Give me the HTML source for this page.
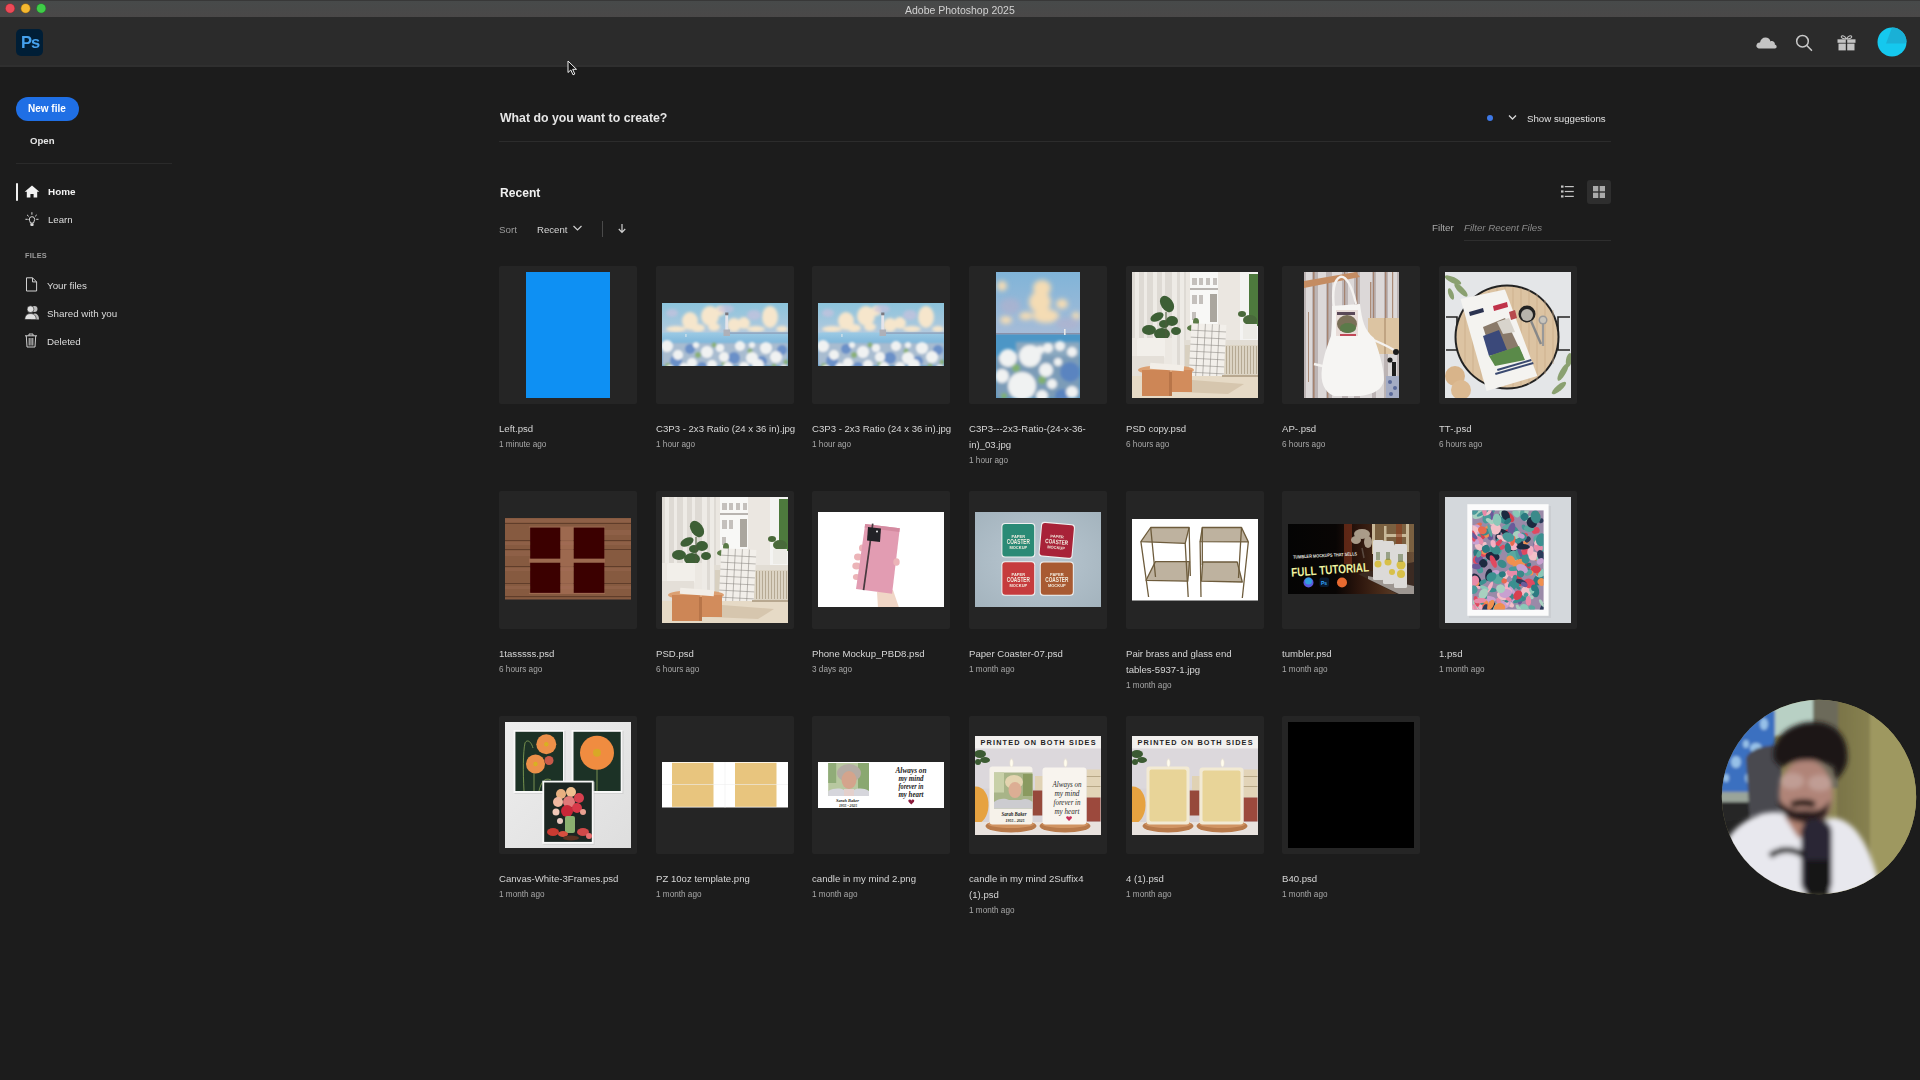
<!DOCTYPE html>
<html><head><meta charset="utf-8"><style>
*{margin:0;padding:0;box-sizing:border-box}
html,body{width:1920px;height:1080px;overflow:hidden}
body{background:#1c1c1c;position:relative;font-family:"Liberation Sans",sans-serif;color:#e8e8e8}
.a{position:absolute}
.t{position:absolute;white-space:nowrap;line-height:1;will-change:transform}
#titlebar{left:0;top:0;width:1920px;height:17px;background:linear-gradient(#474a4a,#4a4848);border-top:1px solid #383838}
.tl{position:absolute;top:3.4px;width:10px;height:10px;border-radius:50%}
#header{left:0;top:17px;width:1920px;height:50px;background:#2b2b2b;border-bottom:2px solid #2f2f2f}
.card{position:absolute;width:138px;height:138px;background:#252525;border-radius:2px;overflow:hidden}
.img{position:absolute;overflow:hidden}
.ct{position:absolute;font-size:9.6px;color:#d6d6d6;line-height:16px;white-space:nowrap;will-change:transform}
.cs{position:absolute;font-size:8.2px;color:#a8a8a8;line-height:16px;white-space:nowrap;will-change:transform}
</style></head><body>

<!-- Title bar -->
<div id="titlebar" class="a"></div>
<svg class="a" style="left:0;top:0" width="50" height="17" viewBox="0 0 50 17"><circle cx="10.1" cy="8.4" r="4.9" fill="#a82a30"/><circle cx="10.1" cy="8.4" r="4.3" fill="#ec4a58"/><circle cx="25.6" cy="8.4" r="4.9" fill="#a87010"/><circle cx="25.6" cy="8.4" r="4.3" fill="#f4b830"/><circle cx="41.2" cy="8.4" r="4.9" fill="#1e8a2a"/><circle cx="41.2" cy="8.4" r="4.3" fill="#40cc48"/></svg>
<div class="t" style="left:905px;top:4.8px;font-size:10.5px;color:#d2d2d2">Adobe Photoshop 2025</div>

<!-- Header -->
<div id="header" class="a"></div>
<div class="a" style="left:16px;top:29px;width:27px;height:27px;background:#001e36;border-radius:5px"></div>
<div class="t" style="left:21.3px;top:34.3px;font-size:16.5px;font-weight:bold;color:#45a2ee;letter-spacing:-1.1px">Ps</div>
<!-- cloud -->
<svg class="a" style="left:1755px;top:33px" width="23" height="17" viewBox="0 0 23 17"><path d="M5 15.5 C2 15.5 1 13.5 1.5 12 C2 10 3.5 9.3 5 9.5 C5.5 6.5 7.5 4.5 10.5 4.5 C13 4.5 15 6 15.5 8.5 C16.5 7.8 18 8 19 9 C20 10 20 11 19.8 11.5 C21.5 12 22 13.5 21.5 14.5 C21 15.3 20.3 15.5 19.5 15.5 Z" fill="#c4c4c4"/></svg>
<!-- search -->
<svg class="a" style="left:1795px;top:34px" width="18" height="18" viewBox="0 0 18 18"><circle cx="7.5" cy="7.2" r="5.8" fill="none" stroke="#c8c8c8" stroke-width="1.5"/><path d="M11.8 11.5 L16.5 16.3" stroke="#c8c8c8" stroke-width="1.6" stroke-linecap="round"/></svg>
<!-- gift -->
<svg class="a" style="left:1837px;top:34px" width="19" height="17" viewBox="0 0 19 17"><path d="M9.5 5 C8 2 5 1 4.3 2.5 C3.8 3.8 6 5 9.5 5 C13 5 15.2 3.8 14.7 2.5 C14 1 11 2 9.5 5" fill="none" stroke="#c0c0c0" stroke-width="1.1"/><rect x="0.5" y="5.3" width="8.3" height="3.5" fill="#c4c4c4"/><rect x="10.2" y="5.3" width="8.3" height="3.5" fill="#c4c4c4"/><rect x="1.5" y="9.6" width="7.3" height="6.8" fill="#c4c4c4"/><rect x="10.2" y="9.6" width="7.3" height="6.8" fill="#c4c4c4"/></svg>
<!-- avatar -->
<svg class="a" style="left:1877px;top:27px" width="30" height="30" viewBox="0 0 30 30"><circle cx="15" cy="15" r="14.5" fill="#15c8ee"/><path d="M15 0.5 A14.5 14.5 0 0 1 29.5 15 L27.5 16.5 L9 16.5 Z" fill="#1ab0d6"/></svg>

<!-- Sidebar -->
<div class="a" style="left:15.5px;top:96.5px;width:63px;height:24px;background:#1f6fe5;border-radius:12px"></div>
<div class="t" style="left:27.5px;top:103.5px;font-size:10px;font-weight:bold;color:#ffffff">New file</div>
<div class="t" style="left:30.3px;top:135.5px;font-size:9.6px;font-weight:bold;color:#e6e6e6">Open</div>
<div class="a" style="left:16px;top:163px;width:156px;height:1px;background:#2a2a2a"></div>
<div class="a" style="left:15.5px;top:183px;width:2.5px;height:17.5px;background:#f0f0f0;border-radius:1px"></div>
<svg class="a" style="left:24px;top:185px" width="16" height="13" viewBox="0 0 16 13"><path d="M8 0.5 L15.3 6.8 L13.2 6.8 L13.2 12.6 L9.6 12.6 L9.6 9 L6.4 9 L6.4 12.6 L2.8 12.6 L2.8 6.8 L0.7 6.8 Z" fill="#f2f2f2"/></svg>
<div class="t" style="left:47.5px;top:187px;font-size:9.9px;font-weight:bold;color:#f2f2f2">Home</div>
<svg class="a" style="left:24px;top:211px" width="16" height="16" viewBox="0 0 16 16"><g stroke="#d8d8d8" stroke-width="1" fill="none" stroke-linecap="round"><path d="M7.9 1.6 V3.3"/><path d="M3.3 4.1 L4.4 5.1"/><path d="M12.5 4.1 L11.4 5.1"/><path d="M1.8 8.3 H3.3"/><path d="M12.6 8.3 H14.1"/><path d="M5.2 8.4 A2.75 2.75 0 1 1 10.7 8.4 C10.7 10 9.6 10.4 9.5 12 H6.4 C6.3 10.4 5.2 10 5.2 8.4 Z"/></g><rect x="6.3" y="12.2" width="3.3" height="2.8" rx="1" fill="#d8d8d8"/></svg>
<div class="t" style="left:47.5px;top:215px;font-size:9.6px;color:#dedede">Learn</div>
<div class="t" style="left:25px;top:252px;font-size:7.4px;font-weight:bold;color:#9c9c9c;letter-spacing:0.2px">FILES</div>
<svg class="a" style="left:25px;top:277px" width="13" height="15" viewBox="0 0 13 15"><path d="M1.5 0.8 H7.5 L11.6 4.9 V14 H1.5 Z M7.5 0.8 V4.9 H11.6" fill="none" stroke="#d0d0d0" stroke-width="1"/></svg>
<div class="t" style="left:47px;top:281px;font-size:9.8px;color:#dcdcdc">Your files</div>
<svg class="a" style="left:24px;top:305px" width="16" height="15" viewBox="0 0 16 15"><circle cx="10.5" cy="4" r="3" fill="#bdbdbd"/><path d="M7 14.5 C7 10.5 8.5 8.5 10.5 8.5 C12.8 8.5 15 10.3 15 14.5 Z" fill="#bdbdbd"/><circle cx="6.5" cy="4.2" r="3.4" fill="#e0e0e0" stroke="#1c1c1c" stroke-width="0.6"/><path d="M0.8 14.5 C0.8 10.5 3.2 8.6 6.5 8.6 C9.8 8.6 12.2 10.5 12.2 14.5 Z" fill="#e0e0e0" stroke="#1c1c1c" stroke-width="0.6"/></svg>
<div class="t" style="left:47px;top:309px;font-size:9.8px;color:#dcdcdc">Shared with you</div>
<svg class="a" style="left:24px;top:333px" width="14" height="15" viewBox="0 0 14 15"><g fill="none" stroke="#cfcfcf" stroke-width="1"><path d="M1 2.8 H13"/><path d="M5 2.8 V1 H9 V2.8"/><path d="M2.3 3 L3 14 H11 L11.7 3"/><path d="M5.2 5 V12.5 M7 5 V12.5 M8.8 5 V12.5"/></g></svg>
<div class="t" style="left:47px;top:337px;font-size:9.8px;color:#dcdcdc">Deleted</div>

<!-- Main -->
<div class="t" style="left:499.5px;top:111.6px;font-size:12.3px;font-weight:bold;color:#e6e6e6">What do you want to create?</div>
<div class="a" style="left:1490px;top:118px;width:6px;height:6px;margin:-3px 0 0 -3px;border-radius:50%;background:#3d78e6"></div>
<svg class="a" style="left:1508px;top:114px" width="9" height="7" viewBox="0 0 9 7"><path d="M1 1.5 L4.5 5 L8 1.5" fill="none" stroke="#d8d8d8" stroke-width="1.3"/></svg>
<div class="t" style="left:1527px;top:113.5px;font-size:9.7px;color:#e0e0e0">Show suggestions</div>
<div class="a" style="left:499px;top:141px;width:1112px;height:1px;background:#2c2c2c"></div>
<div class="t" style="left:499.5px;top:186.6px;font-size:12.1px;font-weight:bold;color:#f0f0f0">Recent</div>
<svg class="a" style="left:1560px;top:184px" width="15" height="15" viewBox="0 0 15 15"><g fill="#c4c4c4"><rect x="1" y="1.5" width="2.5" height="2.2"/><rect x="1" y="6.4" width="2.5" height="2.2"/><rect x="1" y="11.3" width="2.5" height="2.2"/><rect x="4.8" y="2" width="9" height="1.2"/><rect x="4.8" y="6.9" width="9" height="1.2"/><rect x="4.8" y="11.8" width="9" height="1.2"/></g></svg>
<div class="a" style="left:1587px;top:180px;width:24px;height:24px;background:#2e2e2e;border-radius:3px"></div>
<svg class="a" style="left:1592px;top:185px" width="14" height="14" viewBox="0 0 14 14"><g fill="#ababab"><rect x="1" y="1" width="5.3" height="5.3"/><rect x="7.7" y="1" width="5.3" height="5.3"/><rect x="1" y="7.7" width="5.3" height="5.3"/><rect x="7.7" y="7.7" width="5.3" height="5.3"/></g></svg>
<div class="t" style="left:499.3px;top:224.5px;font-size:9.8px;color:#9a9a9a">Sort</div>
<div class="t" style="left:536.7px;top:225px;font-size:9.6px;color:#d6d6d6">Recent</div>
<svg class="a" style="left:572px;top:224px" width="11" height="8" viewBox="0 0 11 8"><path d="M1.5 2 L5.5 6 L9.5 2" fill="none" stroke="#cfcfcf" stroke-width="1.2"/></svg>
<div class="a" style="left:601.5px;top:221px;width:1px;height:16px;background:#4a4a4a"></div>
<svg class="a" style="left:617px;top:223px" width="10" height="11" viewBox="0 0 10 11"><path d="M5 1 V9 M1.8 6 L5 9.3 L8.2 6" fill="none" stroke="#d0d0d0" stroke-width="1.2"/></svg>
<div class="t" style="left:1432px;top:222.5px;font-size:9.8px;color:#a8a8a8">Filter</div>
<div class="t" style="left:1464px;top:223px;font-size:9.7px;font-style:italic;color:#8a8a8a">Filter Recent Files</div>
<div class="a" style="left:1464px;top:240px;width:147px;height:1px;background:#2e2e2e"></div>
<div class="card" style="left:499.00px;top:266px"><div class="img" style="left:27px;top:6px;width:84px;height:126px"><svg width="84" height="126" viewBox="0 0 84 126" style="display:block" ><rect width="84" height="126" fill="#0e90f3"/></svg></div></div>
<div class="ct" style="left:499.00px;top:421px">Left.psd</div>
<div class="cs" style="left:499.00px;top:437px">1 minute ago</div>
<div class="card" style="left:655.67px;top:266px"><div class="img" style="left:6px;top:37px;width:126px;height:63px"><svg width="126" height="63" viewBox="0 0 126 63" style="display:block" >
<defs><linearGradient id="lskya" x1="0" y1="0" x2="0" y2="1"><stop offset="0" stop-color="#8cc4dc"/><stop offset="0.6" stop-color="#bccade"/><stop offset="1" stop-color="#d8cadc"/></linearGradient>
<linearGradient id="lseaa" x1="0" y1="0" x2="0" y2="1"><stop offset="0" stop-color="#9ccae4"/><stop offset="1" stop-color="#3a8ac6"/></linearGradient>
<filter id="lba" x="-30%" y="-30%" width="160%" height="160%"><feGaussianBlur stdDeviation="1.8"/></filter>
<filter id="lb2a" x="-10%" y="-10%" width="120%" height="120%"><feGaussianBlur stdDeviation="1.1"/></filter></defs>
<rect width="126" height="63" fill="url(#lskya)"/>
<g fill="#f6e6cc" filter="url(#lba)"><ellipse cx="28" cy="18" rx="8" ry="9"/><ellipse cx="36" cy="25" rx="7" ry="4"/><ellipse cx="48" cy="13" rx="9" ry="10"/><ellipse cx="52" cy="24" rx="6" ry="4"/><ellipse cx="72" cy="22" rx="7" ry="7"/><ellipse cx="82" cy="20" rx="6" ry="6"/><ellipse cx="108" cy="14" rx="8" ry="11"/><ellipse cx="94" cy="26" rx="9" ry="3"/><ellipse cx="14" cy="26" rx="10" ry="3"/><ellipse cx="120" cy="26" rx="6" ry="3"/><ellipse cx="58" cy="8" rx="5" ry="5"/></g>
<g fill="#c8c2de" opacity="0.7" filter="url(#lba)"><ellipse cx="64" cy="6" rx="8" ry="4"/><ellipse cx="92" cy="12" rx="7" ry="5"/><ellipse cx="10" cy="10" rx="6" ry="4"/></g>
<rect x="0" y="29.5" width="126" height="34" fill="url(#lseaa)"/>
<rect x="68" y="29.5" width="58" height="1.1" fill="#8c96b0"/>
<rect x="63.3" y="12" width="2.8" height="18" fill="#e4e4ea"/><rect x="63.2" y="9.5" width="3.2" height="2.8" fill="#7a7880"/><rect x="61.5" y="26.5" width="6.5" height="6.5" fill="#aeb0b8"/>
<rect x="23.5" y="31" width="0.9" height="3" fill="#f0f0f0"/>
<g filter="url(#lb2a)">
<rect x="0" y="40" width="126" height="23" fill="#a8bcd0"/>
<g fill="#6a90c8"><circle cx="28" cy="46" r="5"/><circle cx="72" cy="55" r="6"/><circle cx="14" cy="58" r="6"/><circle cx="100" cy="58" r="5"/><circle cx="120" cy="47" r="5"/><circle cx="40" cy="64" r="5"/></g>
<g fill="#8ab078"><circle cx="36" cy="52" r="3"/><circle cx="88" cy="48" r="2.5"/><circle cx="6" cy="63" r="3"/><circle cx="62" cy="61" r="2.5"/><circle cx="112" cy="63" r="2.5"/><circle cx="124" cy="59" r="2.5"/><circle cx="52" cy="42" r="2.5"/></g>
<g fill="#f0f2f2"><circle cx="5" cy="43" r="6"/><circle cx="16" cy="52" r="5"/><circle cx="45" cy="49" r="6"/><circle cx="58" cy="45" r="4"/><circle cx="62" cy="54" r="5"/><circle cx="78" cy="43" r="5"/><circle cx="90" cy="55" r="6"/><circle cx="104" cy="45" r="6"/><circle cx="96" cy="62" r="6"/><circle cx="50" cy="62" r="5"/><circle cx="66" cy="64" r="5"/><circle cx="82" cy="64" r="5"/><circle cx="22" cy="65" r="5"/><circle cx="114" cy="54" r="6"/><circle cx="30" cy="60" r="5"/><circle cx="90" cy="42" r="3"/><circle cx="122" cy="66" r="4"/><circle cx="8" cy="66" r="4"/><circle cx="34" cy="42" r="3"/></g>
</g>
</svg></div></div>
<div class="ct" style="left:655.67px;top:421px">C3P3 - 2x3 Ratio (24 x 36 in).jpg</div>
<div class="cs" style="left:655.67px;top:437px">1 hour ago</div>
<div class="card" style="left:812.33px;top:266px"><div class="img" style="left:6px;top:37px;width:126px;height:63px"><svg width="126" height="63" viewBox="0 0 126 63" style="display:block" >
<defs><linearGradient id="lskyb" x1="0" y1="0" x2="0" y2="1"><stop offset="0" stop-color="#8cc4dc"/><stop offset="0.6" stop-color="#bccade"/><stop offset="1" stop-color="#d8cadc"/></linearGradient>
<linearGradient id="lseab" x1="0" y1="0" x2="0" y2="1"><stop offset="0" stop-color="#9ccae4"/><stop offset="1" stop-color="#3a8ac6"/></linearGradient>
<filter id="lbb" x="-30%" y="-30%" width="160%" height="160%"><feGaussianBlur stdDeviation="1.8"/></filter>
<filter id="lb2b" x="-10%" y="-10%" width="120%" height="120%"><feGaussianBlur stdDeviation="1.1"/></filter></defs>
<rect width="126" height="63" fill="url(#lskyb)"/>
<g fill="#f6e6cc" filter="url(#lbb)"><ellipse cx="28" cy="18" rx="8" ry="9"/><ellipse cx="36" cy="25" rx="7" ry="4"/><ellipse cx="48" cy="13" rx="9" ry="10"/><ellipse cx="52" cy="24" rx="6" ry="4"/><ellipse cx="72" cy="22" rx="7" ry="7"/><ellipse cx="82" cy="20" rx="6" ry="6"/><ellipse cx="108" cy="14" rx="8" ry="11"/><ellipse cx="94" cy="26" rx="9" ry="3"/><ellipse cx="14" cy="26" rx="10" ry="3"/><ellipse cx="120" cy="26" rx="6" ry="3"/><ellipse cx="58" cy="8" rx="5" ry="5"/></g>
<g fill="#c8c2de" opacity="0.7" filter="url(#lbb)"><ellipse cx="64" cy="6" rx="8" ry="4"/><ellipse cx="92" cy="12" rx="7" ry="5"/><ellipse cx="10" cy="10" rx="6" ry="4"/></g>
<rect x="0" y="29.5" width="126" height="34" fill="url(#lseab)"/>
<rect x="68" y="29.5" width="58" height="1.1" fill="#8c96b0"/>
<rect x="63.3" y="12" width="2.8" height="18" fill="#e4e4ea"/><rect x="63.2" y="9.5" width="3.2" height="2.8" fill="#7a7880"/><rect x="61.5" y="26.5" width="6.5" height="6.5" fill="#aeb0b8"/>
<rect x="23.5" y="31" width="0.9" height="3" fill="#f0f0f0"/>
<g filter="url(#lb2b)">
<rect x="0" y="40" width="126" height="23" fill="#a8bcd0"/>
<g fill="#6a90c8"><circle cx="28" cy="46" r="5"/><circle cx="72" cy="55" r="6"/><circle cx="14" cy="58" r="6"/><circle cx="100" cy="58" r="5"/><circle cx="120" cy="47" r="5"/><circle cx="40" cy="64" r="5"/></g>
<g fill="#8ab078"><circle cx="36" cy="52" r="3"/><circle cx="88" cy="48" r="2.5"/><circle cx="6" cy="63" r="3"/><circle cx="62" cy="61" r="2.5"/><circle cx="112" cy="63" r="2.5"/><circle cx="124" cy="59" r="2.5"/><circle cx="52" cy="42" r="2.5"/></g>
<g fill="#f0f2f2"><circle cx="5" cy="43" r="6"/><circle cx="16" cy="52" r="5"/><circle cx="45" cy="49" r="6"/><circle cx="58" cy="45" r="4"/><circle cx="62" cy="54" r="5"/><circle cx="78" cy="43" r="5"/><circle cx="90" cy="55" r="6"/><circle cx="104" cy="45" r="6"/><circle cx="96" cy="62" r="6"/><circle cx="50" cy="62" r="5"/><circle cx="66" cy="64" r="5"/><circle cx="82" cy="64" r="5"/><circle cx="22" cy="65" r="5"/><circle cx="114" cy="54" r="6"/><circle cx="30" cy="60" r="5"/><circle cx="90" cy="42" r="3"/><circle cx="122" cy="66" r="4"/><circle cx="8" cy="66" r="4"/><circle cx="34" cy="42" r="3"/></g>
</g>
</svg></div></div>
<div class="ct" style="left:812.33px;top:421px">C3P3 - 2x3 Ratio (24 x 36 in).jpg</div>
<div class="cs" style="left:812.33px;top:437px">1 hour ago</div>
<div class="card" style="left:969.00px;top:266px"><div class="img" style="left:27px;top:6px;width:84px;height:126px"><svg width="84" height="126" viewBox="0 0 84 126" style="display:block" >
<defs><linearGradient id="psky" x1="0" y1="0" x2="0" y2="1"><stop offset="0" stop-color="#80b4d8"/><stop offset="0.5" stop-color="#a6bcd8"/><stop offset="1" stop-color="#c4c2d8"/></linearGradient>
<filter id="pb" x="-30%" y="-30%" width="160%" height="160%"><feGaussianBlur stdDeviation="2.4"/></filter>
<filter id="pb2" x="-10%" y="-10%" width="120%" height="120%"><feGaussianBlur stdDeviation="1.6"/></filter></defs>
<rect width="84" height="126" fill="url(#psky)"/>
<g fill="#f4dcb4" filter="url(#pb)"><ellipse cx="46" cy="16" rx="9" ry="8"/><ellipse cx="44" cy="30" rx="11" ry="11"/><ellipse cx="50" cy="44" rx="13" ry="7"/><ellipse cx="30" cy="44" rx="7" ry="4"/><ellipse cx="10" cy="48" rx="6" ry="4"/><ellipse cx="66" cy="32" rx="6" ry="5"/><ellipse cx="6" cy="14" rx="5" ry="5"/><ellipse cx="80" cy="44" rx="4" ry="4"/></g>
<g fill="#b4b0cc" opacity="0.6" filter="url(#pb)"><ellipse cx="14" cy="34" rx="10" ry="8"/><ellipse cx="72" cy="52" rx="12" ry="6"/></g>
<rect x="0" y="61" width="84" height="1.6" fill="#8a90a8"/>
<rect x="0" y="62.5" width="84" height="64" fill="#4c96c6"/>
<g filter="url(#pb2)">
<rect x="20" y="70" width="64" height="56" fill="#8aa8c0"/>
<rect x="0" y="84" width="84" height="42" fill="#7c9cb8"/>
<g fill="#5a84c0"><circle cx="74" cy="100" r="10"/><circle cx="66" cy="124" r="7"/></g>
<g fill="#80b070"><circle cx="20" cy="96" r="4"/><circle cx="46" cy="108" r="4"/><circle cx="8" cy="124" r="3"/><circle cx="36" cy="92" r="3"/></g>
<g fill="#f0f2f2"><circle cx="12" cy="86" r="9"/><circle cx="34" cy="84" r="11"/><circle cx="52" cy="76" r="5"/><circle cx="64" cy="74" r="5"/><circle cx="76" cy="80" r="5"/><circle cx="6" cy="104" r="7"/><circle cx="26" cy="114" r="14"/><circle cx="50" cy="98" r="7"/><circle cx="76" cy="120" r="6"/><circle cx="46" cy="124" r="6"/><circle cx="44" cy="78" r="4"/><circle cx="56" cy="112" r="5"/><circle cx="62" cy="90" r="4"/></g>
</g>
<rect x="68" y="57" width="1.6" height="6" fill="#e8e8e8"/>
</svg></div></div>
<div class="ct" style="left:969.00px;top:421px">C3P3---2x3-Ratio-(24-x-36-</div>
<div class="ct" style="left:969.00px;top:437px">in)_03.jpg</div>
<div class="cs" style="left:969.00px;top:453px">1 hour ago</div>
<div class="card" style="left:1125.67px;top:266px"><div class="img" style="left:6px;top:6px;width:126px;height:126px"><svg width="126" height="126" viewBox="0 0 126 126" style="display:block" >
<defs><filter id="rba" x="-10%" y="-10%" width="120%" height="120%"><feGaussianBlur stdDeviation="0.7"/></filter></defs>
<g filter="url(#rba)">
<rect width="126" height="126" fill="#ebe7e1"/>
<rect x="0" y="0" width="54" height="100" fill="#dedad4"/>
<g fill="#eeebe6"><rect x="3" y="0" width="4" height="100"/><rect x="12" y="0" width="3" height="100"/><rect x="21" y="0" width="4" height="100"/><rect x="30" y="0" width="3" height="100"/><rect x="40" y="0" width="5" height="100"/><rect x="48" y="0" width="4" height="100"/></g>
<rect x="58" y="0" width="28" height="52" fill="#f8f8f6"/>
<g fill="#c4c0bc"><rect x="60" y="6" width="5" height="7"/><rect x="67" y="6" width="4" height="7"/><rect x="74" y="6" width="4" height="7"/><rect x="81" y="6" width="4" height="7"/><rect x="60" y="23" width="5" height="9"/><rect x="67" y="23" width="4" height="9"/><rect x="78" y="22" width="7" height="28" fill="#aaa69e"/><rect x="60" y="40" width="4" height="8"/></g>
<rect x="58" y="16" width="28" height="2" fill="#b8b4b0"/>
<rect x="108" y="0" width="18" height="68" fill="#f4f4f2"/>
<rect x="117" y="2" width="9" height="52" fill="#4e7a3e"/>
<g fill="#4a6a3a"><ellipse cx="118" cy="48" rx="7" ry="5"/><ellipse cx="110" cy="42" rx="4" ry="3"/></g>
<rect x="111" y="52" width="14" height="15" fill="#ecebe6"/>
<rect x="52" y="68" width="74" height="5" fill="#e2ddd4"/>
<rect x="92" y="73" width="34" height="30" fill="#dcd4c4"/>
<g fill="#b6aa94"><rect x="94" y="74" width="1" height="28"/><rect x="97" y="74" width="1" height="28"/><rect x="100" y="74" width="1" height="28"/><rect x="103" y="74" width="1" height="28"/><rect x="106" y="74" width="1" height="28"/><rect x="109" y="74" width="1" height="28"/><rect x="112" y="74" width="1" height="28"/><rect x="115" y="74" width="1" height="28"/><rect x="118" y="74" width="1" height="28"/><rect x="121" y="74" width="1" height="28"/><rect x="124" y="74" width="1" height="28"/></g>
<rect x="53" y="73" width="6" height="24" fill="#d8d0c0"/>
<g fill="#3e5e36"><ellipse cx="35" cy="32" rx="6" ry="9" transform="rotate(-35 35 32)"/><ellipse cx="25" cy="45" rx="7" ry="4" transform="rotate(-25 25 45)"/><ellipse cx="40" cy="49" rx="6" ry="5"/><ellipse cx="17" cy="58" rx="7" ry="5"/><ellipse cx="30" cy="62" rx="8" ry="6"/><ellipse cx="44" cy="59" rx="5" ry="4"/><ellipse cx="32" cy="52" rx="5" ry="4"/><ellipse cx="36" cy="70" rx="4" ry="3"/></g>
<path d="M34 72 L34 40" stroke="#4a5a3a" stroke-width="1"/>
<g fill="#5a7a46"><ellipse cx="60" cy="56" rx="5" ry="3"/><ellipse cx="64" cy="50" rx="3" ry="4"/></g>
<rect x="58" y="52" width="35" height="54" fill="#f2efea" transform="rotate(3 75 79)"/>
<g stroke="#8a8680" stroke-width="0.55" fill="none" transform="rotate(3 75 79)"><path d="M65 52 V106 M72 52 V106 M79 52 V106 M86 52 V106 M58 59 H93 M58 66 H93 M58 73 H93 M58 80 H93 M58 87 H93 M58 94 H93 M58 101 H93"/></g>
<rect x="0" y="66" width="40" height="38" fill="#ece8e2"/>
<rect x="5" y="66" width="28" height="20" fill="#f2efea" rx="2"/>
<rect x="0" y="84" width="32" height="20" fill="#e4dfd8"/>
<rect x="0" y="104" width="126" height="22" fill="#e6dac6"/>
<path d="M60 108 L112 112 L96 122 L48 120 Z" fill="#d6c6ae"/>
<rect x="90" y="103" width="36" height="2" fill="#b8a890"/>
<ellipse cx="34" cy="98" rx="28" ry="5" fill="#dca072"/>
<rect x="10" y="98" width="28" height="26" fill="#cd8656"/>
<rect x="40" y="98" width="20" height="22" fill="#d28c5c"/>
<rect x="37" y="100" width="3" height="24" fill="#b87448"/>
<rect x="18" y="92" width="34" height="6" fill="#f2eee8" transform="rotate(4 35 95)"/>
</g>
</svg></div></div>
<div class="ct" style="left:1125.67px;top:421px">PSD copy.psd</div>
<div class="cs" style="left:1125.67px;top:437px">6 hours ago</div>
<div class="card" style="left:1282.33px;top:266px"><div class="img" style="left:22px;top:6px;width:95px;height:126px"><svg width="95" height="126" viewBox="0 0 95 126" style="display:block" >
<defs><filter id="ab" x="-10%" y="-10%" width="120%" height="120%"><feGaussianBlur stdDeviation="0.6"/></filter></defs>
<g filter="url(#ab)">
<rect width="95" height="126" fill="#bcb4b4"/>
<g fill="#dcd8d8"><rect x="2" y="0" width="6" height="126"/><rect x="14" y="0" width="8" height="126"/><rect x="28" y="0" width="10" height="126"/><rect x="44" y="0" width="6" height="126"/><rect x="56" y="0" width="12" height="126"/><rect x="72" y="0" width="8" height="126"/><rect x="84" y="0" width="9" height="126"/></g>
<g fill="#a07860" opacity="0.8"><rect x="9" y="0" width="1.6" height="126"/><rect x="66" y="10" width="1.4" height="40"/><rect x="88" y="0" width="1.2" height="50"/><rect x="4" y="40" width="1" height="70"/><rect x="23" y="10" width="1.4" height="116"/><rect x="40" y="0" width="1.2" height="90"/><rect x="52" y="0" width="1.6" height="60"/><rect x="69" y="0" width="1.2" height="50"/><rect x="81" y="0" width="1.4" height="46"/></g>
<path d="M0 9 L52 0 L56 5 L0 16 Z" fill="#c48c62"/>
<rect x="64" y="46" width="31" height="36" fill="#dcc4a2"/>
<rect x="80" y="46" width="2" height="36" fill="#c0a482"/>
<g fill="none" stroke="#f4f2f0" stroke-width="2.4"><path d="M30 36 C28 20 30 8 36 5 C42 3 48 14 52 32"/><path d="M10 92 C18 94 26 96 32 96"/><path d="M60 64 C70 68 80 72 90 78"/></g>
<path d="M28 34 L56 32 C58 48 60 58 70 66 C74 76 80 96 80 108 C78 118 70 122 56 124 L30 124 C20 120 16 110 18 96 C20 82 24 72 27 64 C28 54 28 44 28 34 Z" fill="#f6f5f3"/>
<rect x="32" y="38" width="22" height="26" fill="#e8dcd8"/>
<ellipse cx="43" cy="52" rx="10" ry="9" fill="#7a7058"/>
<ellipse cx="44" cy="56" rx="8" ry="5" fill="#5a7a48"/>
<rect x="33" y="40" width="18" height="3" fill="#5a4a58"/>
<rect x="36" y="62" width="16" height="2" fill="#c04a58"/>
<g fill="#1e1e1e"><circle cx="92" cy="80" r="3"/><circle cx="86" cy="88" r="2.6"/><rect x="88" y="90" width="4" height="14"/></g>
<rect x="82" y="104" width="13" height="22" fill="#a4acc4"/><g fill="#5a6a9a"><circle cx="86" cy="110" r="2"/><circle cx="91" cy="116" r="2"/><circle cx="87" cy="122" r="2"/></g>
</g>
</svg></div></div>
<div class="ct" style="left:1282.33px;top:421px">AP-.psd</div>
<div class="cs" style="left:1282.33px;top:437px">6 hours ago</div>
<div class="card" style="left:1439.00px;top:266px"><div class="img" style="left:6px;top:6px;width:126px;height:126px"><svg width="126" height="126" viewBox="0 0 126 126" style="display:block" >
<defs><filter id="tb" x="-10%" y="-10%" width="120%" height="120%"><feGaussianBlur stdDeviation="0.6"/></filter></defs>
<g filter="url(#tb)">
<rect width="126" height="126" fill="#e4e6e8"/>
<path d="M1 45 H12 V78 H1" fill="none" stroke="#222" stroke-width="1.6"/>
<path d="M125 45 H113 V78 H125" fill="none" stroke="#222" stroke-width="1.6"/>
<circle cx="62" cy="65" r="52.5" fill="#222"/>
<circle cx="62" cy="65" r="50.5" fill="#dcc3a2"/>
<g stroke="#c8aa86" stroke-width="0.7"><path d="M20 38 V92 M28 28 V102 M36 22 V108 M44 18 V112 M52 16 V114 M60 15 V115 M68 15 V115 M76 16 V114 M84 18 V112 M92 22 V108 M100 28 V102 M108 38 V92"/></g>
<g fill="#8aa070"><ellipse cx="8" cy="8" rx="9" ry="3" transform="rotate(25 8 8)"/><ellipse cx="16" cy="18" rx="9" ry="3" transform="rotate(45 16 18)"/><ellipse cx="6" cy="22" rx="6" ry="2.5" transform="rotate(70 6 22)"/><ellipse cx="118" cy="100" rx="10" ry="3" transform="rotate(-60 118 100)"/><ellipse cx="114" cy="116" rx="9" ry="3" transform="rotate(-40 114 116)"/><ellipse cx="124" cy="88" rx="7" ry="3" transform="rotate(-80 124 88)"/></g>
<path d="M15.5 27 L60 17.5 L92.4 104 L41.6 119 Z" fill="#f4f3f0"/>
<path d="M38 55 L60 46 L78 84 L50 92 Z" fill="#8a7a6a"/>
<path d="M38 64 L54 58 L62 78 L44 84 Z" fill="#3a4a7a"/>
<path d="M44 84 L74 74 L80 88 L50 94 Z" fill="#5a8a48"/>
<path d="M52 50 L64 46 L70 60 L58 62 Z" fill="#d8d4cc"/>
<path d="M64 40 L70 38 L72 46 L66 48 Z" fill="#b8484e"/>
<g fill="#2a3050"><path d="M24 40 L38 36 L39 40 L25 44 Z"/></g>
<g fill="#c0304a"><path d="M48 34 L62 30 L63 35 L49 39 Z"/></g>
<g fill="#3a4a70"><path d="M52 97 L86 87 L86.6 89 L52.6 99 Z"/><path d="M50 101 L88 90 L88.6 92 L50.6 103 Z"/></g>
<circle cx="82" cy="42" r="8.5" fill="#222"/><circle cx="82" cy="43" r="6" fill="#b8b4ac"/>
<path d="M86 49 L96 72" stroke="#888" stroke-width="2.4"/>
<circle cx="98" cy="48" r="4.5" fill="#999"/><circle cx="98" cy="48" r="3" fill="#c8c4bc"/>
<path d="M98 52 L98 74" stroke="#999" stroke-width="2.2"/>
<circle cx="10" cy="104" r="10" fill="#d8b48a"/><circle cx="16" cy="118" r="10" fill="#dcba92"/>
</g>
</svg></div></div>
<div class="ct" style="left:1439.00px;top:421px">TT-.psd</div>
<div class="cs" style="left:1439.00px;top:437px">6 hours ago</div>
<div class="card" style="left:499.00px;top:491px"><div class="img" style="left:6px;top:27px;width:126px;height:81.5px"><svg width="126" height="81.5" viewBox="0 0 126 81.5" style="display:block" >
<defs><filter id="wb" x="-10%" y="-10%" width="120%" height="120%"><feGaussianBlur stdDeviation="0.5"/></filter></defs>
<g filter="url(#wb)">
<rect width="126" height="81.5" fill="#865a40"/>
<g fill="#94664a" opacity="0.6"><rect x="0" y="1" width="126" height="3"/><rect x="0" y="24" width="126" height="3"/><rect x="0" y="50" width="126" height="3"/><rect x="0" y="68" width="126" height="3"/><rect x="0" y="33" width="30" height="5"/><rect x="96" y="12" width="30" height="5"/></g>
<g fill="#5a3828" opacity="0.85"><rect y="5" width="126" height="1"/><rect y="22" width="126" height="1"/><rect y="31" width="126" height="1"/><rect y="48" width="126" height="1"/><rect y="65" width="126" height="1"/><rect y="78" width="126" height="1.2"/></g>
<g fill="#a87058" opacity="0.7"><rect x="24" y="8.6" width="76" height="1"/><rect x="24" y="40.6" width="76" height="4"/><rect x="24" y="75" width="76" height="1"/><rect x="55.5" y="9" width="13" height="67"/></g>
<g fill="#3a0004"><rect x="25.2" y="9.6" width="30" height="31"/><rect x="68.8" y="9.6" width="30.5" height="31"/><rect x="25.2" y="44.8" width="30" height="30"/><rect x="68.8" y="44.8" width="30.5" height="30"/></g>
</g>
</svg></div></div>
<div class="ct" style="left:499.00px;top:646px">1tasssss.psd</div>
<div class="cs" style="left:499.00px;top:662px">6 hours ago</div>
<div class="card" style="left:655.67px;top:491px"><div class="img" style="left:6px;top:6px;width:126px;height:126px"><svg width="126" height="126" viewBox="0 0 126 126" style="display:block" >
<defs><filter id="rbb" x="-10%" y="-10%" width="120%" height="120%"><feGaussianBlur stdDeviation="0.7"/></filter></defs>
<g filter="url(#rbb)">
<rect width="126" height="126" fill="#ebe7e1"/>
<rect x="0" y="0" width="54" height="100" fill="#dedad4"/>
<g fill="#eeebe6"><rect x="3" y="0" width="4" height="100"/><rect x="12" y="0" width="3" height="100"/><rect x="21" y="0" width="4" height="100"/><rect x="30" y="0" width="3" height="100"/><rect x="40" y="0" width="5" height="100"/><rect x="48" y="0" width="4" height="100"/></g>
<rect x="58" y="0" width="28" height="52" fill="#f8f8f6"/>
<g fill="#c4c0bc"><rect x="60" y="6" width="5" height="7"/><rect x="67" y="6" width="4" height="7"/><rect x="74" y="6" width="4" height="7"/><rect x="81" y="6" width="4" height="7"/><rect x="60" y="23" width="5" height="9"/><rect x="67" y="23" width="4" height="9"/><rect x="78" y="22" width="7" height="28" fill="#aaa69e"/><rect x="60" y="40" width="4" height="8"/></g>
<rect x="58" y="16" width="28" height="2" fill="#b8b4b0"/>
<rect x="108" y="0" width="18" height="68" fill="#f4f4f2"/>
<rect x="117" y="2" width="9" height="52" fill="#4e7a3e"/>
<g fill="#4a6a3a"><ellipse cx="118" cy="48" rx="7" ry="5"/><ellipse cx="110" cy="42" rx="4" ry="3"/></g>
<rect x="111" y="52" width="14" height="15" fill="#ecebe6"/>
<rect x="52" y="68" width="74" height="5" fill="#e2ddd4"/>
<rect x="92" y="73" width="34" height="30" fill="#dcd4c4"/>
<g fill="#b6aa94"><rect x="94" y="74" width="1" height="28"/><rect x="97" y="74" width="1" height="28"/><rect x="100" y="74" width="1" height="28"/><rect x="103" y="74" width="1" height="28"/><rect x="106" y="74" width="1" height="28"/><rect x="109" y="74" width="1" height="28"/><rect x="112" y="74" width="1" height="28"/><rect x="115" y="74" width="1" height="28"/><rect x="118" y="74" width="1" height="28"/><rect x="121" y="74" width="1" height="28"/><rect x="124" y="74" width="1" height="28"/></g>
<rect x="53" y="73" width="6" height="24" fill="#d8d0c0"/>
<g fill="#3e5e36"><ellipse cx="35" cy="32" rx="6" ry="9" transform="rotate(-35 35 32)"/><ellipse cx="25" cy="45" rx="7" ry="4" transform="rotate(-25 25 45)"/><ellipse cx="40" cy="49" rx="6" ry="5"/><ellipse cx="17" cy="58" rx="7" ry="5"/><ellipse cx="30" cy="62" rx="8" ry="6"/><ellipse cx="44" cy="59" rx="5" ry="4"/><ellipse cx="32" cy="52" rx="5" ry="4"/><ellipse cx="36" cy="70" rx="4" ry="3"/></g>
<path d="M34 72 L34 40" stroke="#4a5a3a" stroke-width="1"/>
<g fill="#5a7a46"><ellipse cx="60" cy="56" rx="5" ry="3"/><ellipse cx="64" cy="50" rx="3" ry="4"/></g>
<rect x="58" y="52" width="35" height="54" fill="#f2efea" transform="rotate(3 75 79)"/>
<g stroke="#8a8680" stroke-width="0.55" fill="none" transform="rotate(3 75 79)"><path d="M65 52 V106 M72 52 V106 M79 52 V106 M86 52 V106 M58 59 H93 M58 66 H93 M58 73 H93 M58 80 H93 M58 87 H93 M58 94 H93 M58 101 H93"/></g>
<rect x="0" y="66" width="40" height="38" fill="#ece8e2"/>
<rect x="5" y="66" width="28" height="20" fill="#f2efea" rx="2"/>
<rect x="0" y="84" width="32" height="20" fill="#e4dfd8"/>
<rect x="0" y="104" width="126" height="22" fill="#e6dac6"/>
<path d="M60 108 L112 112 L96 122 L48 120 Z" fill="#d6c6ae"/>
<rect x="90" y="103" width="36" height="2" fill="#b8a890"/>
<ellipse cx="34" cy="98" rx="28" ry="5" fill="#dca072"/>
<rect x="10" y="98" width="28" height="26" fill="#cd8656"/>
<rect x="40" y="98" width="20" height="22" fill="#d28c5c"/>
<rect x="37" y="100" width="3" height="24" fill="#b87448"/>
<rect x="18" y="92" width="34" height="6" fill="#f2eee8" transform="rotate(4 35 95)"/>
</g>
</svg></div></div>
<div class="ct" style="left:655.67px;top:646px">PSD.psd</div>
<div class="cs" style="left:655.67px;top:662px">6 hours ago</div>
<div class="card" style="left:812.33px;top:491px"><div class="img" style="left:6px;top:20.75px;width:126px;height:95.5px"><svg width="126" height="95.5" viewBox="0 0 126 95.5" style="display:block" >
<defs><filter id="phb" x="-10%" y="-10%" width="120%" height="120%"><feGaussianBlur stdDeviation="0.5"/></filter></defs>
<g filter="url(#phb)">
<rect width="126" height="95.5" fill="#ffffff"/>
<path d="M60 95.5 L59 80 L75 78 L81 95.5 Z" fill="#f0d6c6"/>
<g fill="#ecb4b8"><ellipse cx="44" cy="36" rx="3" ry="3.5"/><ellipse cx="40" cy="45" rx="4" ry="3.4"/><ellipse cx="38.5" cy="54" rx="4.2" ry="3.4"/><ellipse cx="38.5" cy="65" rx="3.6" ry="3"/></g>
<path d="M47.2 12 L81.8 16.3 L74.1 81.8 L38 77 Z" fill="#e29cb2"/>
<path d="M47.2 12 L81.8 16.3 L81.3 20 L46.6 15.5 Z" fill="#d48aa0"/>
<path d="M53.9 11.5 L55.6 11.7 L46.4 78.2 L44.7 78 Z" fill="#4a3a40"/>
<path d="M50 15 L63 16.5 L62 30 L49 28.5 Z" fill="#222226"/>
<circle cx="59" cy="19.5" r="1" fill="#eee"/>
<ellipse cx="78.5" cy="50" rx="3.2" ry="3.8" fill="#ecb4b8"/>
</g>
</svg></div></div>
<div class="ct" style="left:812.33px;top:646px">Phone Mockup_PBD8.psd</div>
<div class="cs" style="left:812.33px;top:662px">3 days ago</div>
<div class="card" style="left:969.00px;top:491px"><div class="img" style="left:6px;top:21px;width:126px;height:95px"><svg width="126" height="95" viewBox="0 0 126 95" style="display:block" >
<defs><radialGradient id="cbg" cx="0.5" cy="0.5" r="0.75"><stop offset="0" stop-color="#bac8d2"/><stop offset="1" stop-color="#a2b2bc"/></radialGradient>
<filter id="cb" x="-10%" y="-10%" width="120%" height="120%"><feGaussianBlur stdDeviation="0.45"/></filter></defs>
<rect width="126" height="95" fill="url(#cbg)"/>
<g filter="url(#cb)">
<g fill="#f0f0f0"><rect x="26.4" y="11" width="33.8" height="34.6" rx="3.5"/><rect x="64.8" y="11" width="34" height="34.8" rx="3.5" transform="rotate(5 82 28.4)"/><rect x="26.4" y="49.2" width="33.8" height="34.6" rx="3.5"/><rect x="64.8" y="49.6" width="34" height="34.2" rx="3.5"/></g>
<rect x="27.4" y="12" width="31.8" height="32.6" rx="3" fill="#2a8a74"/>
<rect x="65.8" y="12" width="32" height="32.8" rx="3" fill="#a82438" transform="rotate(5 82 28.4)"/>
<rect x="27.4" y="50.2" width="31.8" height="32.6" rx="3" fill="#c63a3c"/>
<rect x="65.8" y="50.6" width="32" height="32.2" rx="3" fill="#a85a30"/>
<g font-family="Liberation Sans" font-weight="bold" fill="#f2ece0" text-anchor="middle">
<text x="43.3" y="26" font-size="4">PAPER</text><text x="43.3" y="32" font-size="6.4" textLength="23" lengthAdjust="spacingAndGlyphs">COASTER</text><text x="43.3" y="37" font-size="4">MOCKUP</text>
<g transform="rotate(5 82 28.4)"><text x="81.8" y="26" font-size="4">PAPER</text><text x="81.8" y="32" font-size="6.4" textLength="23" lengthAdjust="spacingAndGlyphs">COASTER</text><text x="81.8" y="37" font-size="4">MOCKUP</text></g>
<text x="43.3" y="64" font-size="4">PAPER</text><text x="43.3" y="70" font-size="6.4" textLength="23" lengthAdjust="spacingAndGlyphs">COASTER</text><text x="43.3" y="75" font-size="4">MOCKUP</text>
<text x="81.8" y="64" font-size="4">PAPER</text><text x="81.8" y="70" font-size="6.4" textLength="23" lengthAdjust="spacingAndGlyphs">COASTER</text><text x="81.8" y="75" font-size="4">MOCKUP</text>
</g></g>
</svg></div></div>
<div class="ct" style="left:969.00px;top:646px">Paper Coaster-07.psd</div>
<div class="cs" style="left:969.00px;top:662px">1 month ago</div>
<div class="card" style="left:1125.67px;top:491px"><div class="img" style="left:6px;top:28px;width:126px;height:81.5px"><svg width="126" height="81.5" viewBox="0 0 126 81.5" style="display:block" >
<defs><filter id="bb" x="-10%" y="-10%" width="120%" height="120%"><feGaussianBlur stdDeviation="0.35"/></filter></defs>
<rect width="126" height="81.5" fill="#ffffff"/>
<g filter="url(#bb)">
<g fill="#a8987e" opacity="0.75"><path d="M18.7 8.5 L57.1 8.5 L53.2 24.3 L8.9 22.6 Z"/><path d="M23.4 42.6 L57.5 42.6 L55.8 62.2 L14.1 61.3 Z"/><path d="M70.3 8.5 L109.5 8.5 L116.3 22.9 L68.1 22.6 Z"/><path d="M70.7 43 L105.2 43 L110.3 63 L69.4 62.2 Z"/></g>
<g fill="none" stroke="#6e5c3c" stroke-width="1.3" stroke-linejoin="round">
<path d="M18.7 8.5 L57.1 8.5 L53.2 24.3 L8.9 22.6 Z"/><path d="M23.4 42.6 L57.5 42.6 L55.8 62.2 L14.1 61.3 Z"/>
<path d="M8.9 22.6 L16.6 78 M53.2 24.3 L56.2 78 M18.7 8.5 L23.5 58 M57.1 8.5 L58.3 57"/>
<path d="M70.3 8.5 L109.5 8.5 L116.3 22.9 L68.1 22.6 Z"/><path d="M70.7 43 L105.2 43 L110.3 63 L69.4 62.2 Z"/>
<path d="M68.1 22.6 L69 78 M116.3 23 L110.3 79 M70.3 8.5 L70.3 46 M109.5 8.5 L106.5 59"/>
</g></g>
</svg></div></div>
<div class="ct" style="left:1125.67px;top:646px">Pair brass and glass end</div>
<div class="ct" style="left:1125.67px;top:662px">tables-5937-1.jpg</div>
<div class="cs" style="left:1125.67px;top:678px">1 month ago</div>
<div class="card" style="left:1282.33px;top:491px"><div class="img" style="left:6px;top:32.7px;width:126px;height:70.5px"><svg width="126" height="70.5" viewBox="0 0 126 70.5" style="display:block" >
<defs><linearGradient id="tbg" x1="0" y1="0" x2="1" y2="0"><stop offset="0" stop-color="#040404"/><stop offset="0.38" stop-color="#080504"/><stop offset="0.55" stop-color="#2a140c"/><stop offset="0.75" stop-color="#4a2c1a"/><stop offset="1" stop-color="#6a5038"/></linearGradient>
<filter id="tub" x="-10%" y="-10%" width="120%" height="120%"><feGaussianBlur stdDeviation="0.6"/></filter></defs>
<rect width="126" height="70.5" fill="url(#tbg)"/>
<g filter="url(#tub)">
<rect x="86" y="0" width="40" height="28" fill="#7a6040"/>
<g fill="#c8b898"><rect x="84" y="0" width="3" height="30"/><rect x="96" y="2" width="2.5" height="20"/><rect x="118" y="0" width="3" height="28"/><rect x="98" y="10" width="20" height="3"/></g>
<g fill="#8a3a20" opacity="0.6"><rect x="108" y="0" width="6" height="26"/><rect x="56" y="0" width="8" height="40"/></g>
<g fill="#c8bca8" opacity="0.8"><ellipse cx="74" cy="10" rx="8" ry="5"/><ellipse cx="68" cy="16" rx="5" ry="4"/><ellipse cx="80" cy="18" rx="4" ry="6"/></g>
<path d="M74 24 L76 34" stroke="#5a4a40" stroke-width="1.5"/>
<path d="M70 50 L126 38 L126 70.5 L110 70.5 Z" fill="#3a2a22"/>
<path d="M80 52 L126 62 L126 70.5 L112 70.5 L80 55 Z" fill="#c8c4c0" opacity="0.7"/>
<g fill="#dcdad8"><rect x="85" y="16" width="11" height="40" rx="1.5"/><rect x="95" y="17" width="11" height="43" rx="1.5"/><rect x="106" y="20" width="13" height="44" rx="1.5"/></g>
<g fill="#d8c048"><circle cx="90" cy="40" r="3.5"/><circle cx="100" cy="38" r="3.5"/><circle cx="113" cy="41" r="4.5"/><circle cx="113" cy="50" r="4"/><circle cx="104" cy="48" r="3"/></g>
<g fill="#6a7a50" opacity="0.6"><rect x="88" y="28" width="4" height="8"/><rect x="98" y="28" width="4" height="8"/><rect x="110" y="30" width="5" height="8"/></g>
</g>
<text x="5" y="33" font-family="Liberation Sans" font-weight="bold" font-size="4.6" fill="#e8e8e0" transform="rotate(-3 37 31)" textLength="64" lengthAdjust="spacingAndGlyphs">TUMBLER MOCKUPS THAT SELLS</text>
<text x="3" y="50" font-family="Liberation Sans" font-weight="bold" font-size="12.5" fill="#eef2a0" transform="rotate(-4 42 44)" textLength="78" lengthAdjust="spacingAndGlyphs">FULL TUTORIAL</text>
<circle cx="20.5" cy="58.5" r="5" fill="#5a5ae0"/><circle cx="20.5" cy="57" r="3.5" fill="#28b0e0" opacity="0.8"/>
<rect x="31.5" y="53.5" width="9.5" height="9.5" rx="2" fill="#0a1a30"/><text x="33" y="60.8" font-family="Liberation Sans" font-weight="bold" font-size="5" fill="#31a8ff">Ps</text>
<circle cx="54" cy="58.5" r="5" fill="#e86a30"/>
</svg></div></div>
<div class="ct" style="left:1282.33px;top:646px">tumbler.psd</div>
<div class="cs" style="left:1282.33px;top:662px">1 month ago</div>
<div class="card" style="left:1439.00px;top:491px"><div class="img" style="left:6px;top:6px;width:126px;height:126px"><svg width="126" height="126" viewBox="0 0 126 126" style="display:block" >
<defs><clipPath id="fc"><rect x="27.3" y="13.4" width="71.3" height="99.2"/></clipPath>
<filter id="fb" x="-10%" y="-10%" width="120%" height="120%"><feGaussianBlur stdDeviation="0.7"/></filter></defs>
<rect width="126" height="126" fill="#d4d8dc"/>
<rect x="24" y="9" width="82" height="112" fill="#c4c8cc" opacity="0.6"/>
<rect x="22.3" y="7.2" width="81.3" height="111.6" fill="#fbfbfb"/>
<rect x="27.3" y="13.4" width="71.3" height="99.2" fill="#9a8aa8"/>
<g clip-path="url(#fc)" filter="url(#fb)"><ellipse cx="50.3" cy="28.3" rx="4.1" ry="2.4" fill="#8ac8b8" transform="rotate(96 50.3 28.3)"/><ellipse cx="68.7" cy="103.5" rx="2.4" ry="2.4" fill="#c8a0d0" transform="rotate(75 68.7 103.5)"/><ellipse cx="33.7" cy="55.4" rx="4.8" ry="2.6" fill="#f4b0c4" transform="rotate(40 33.7 55.4)"/><ellipse cx="68.3" cy="52.7" rx="5.4" ry="2.2" fill="#1e2a40" transform="rotate(155 68.3 52.7)"/><ellipse cx="57.1" cy="66.9" rx="3.8" ry="4.8" fill="#3a8a8a" transform="rotate(123 57.1 66.9)"/><ellipse cx="68.6" cy="76.7" rx="3.0" ry="4.7" fill="#f4b0c4" transform="rotate(11 68.6 76.7)"/><ellipse cx="71.2" cy="62.5" rx="3.6" ry="5.9" fill="#a8d0c0" transform="rotate(84 71.2 62.5)"/><ellipse cx="53.0" cy="38.0" rx="2.2" ry="5.9" fill="#1e2a40" transform="rotate(15 53.0 38.0)"/><ellipse cx="64.6" cy="100.0" rx="4.4" ry="3.4" fill="#3a8a8a" transform="rotate(176 64.6 100.0)"/><ellipse cx="63.6" cy="29.7" rx="2.9" ry="6.7" fill="#5aa8a0" transform="rotate(76 63.6 29.7)"/><ellipse cx="81.6" cy="70.1" rx="5.0" ry="3.6" fill="#d84050" transform="rotate(125 81.6 70.1)"/><ellipse cx="68.5" cy="58.6" rx="4.9" ry="6.7" fill="#5aa8a0" transform="rotate(85 68.5 58.6)"/><ellipse cx="31.6" cy="82.8" rx="4.1" ry="7.0" fill="#1e2a40" transform="rotate(148 31.6 82.8)"/><ellipse cx="78.2" cy="101.2" rx="2.9" ry="6.7" fill="#3a8a8a" transform="rotate(64 78.2 101.2)"/><ellipse cx="62.4" cy="35.0" rx="2.6" ry="5.7" fill="#d84050" transform="rotate(72 62.4 35.0)"/><ellipse cx="33.0" cy="57.9" rx="3.7" ry="6.4" fill="#2a7a80" transform="rotate(147 33.0 57.9)"/><ellipse cx="47.1" cy="54.5" rx="2.9" ry="6.4" fill="#4a9a9a" transform="rotate(172 47.1 54.5)"/><ellipse cx="33.2" cy="28.4" rx="4.1" ry="2.1" fill="#e86a50" transform="rotate(150 33.2 28.4)"/><ellipse cx="46.0" cy="13.8" rx="3.2" ry="3.8" fill="#4a9a9a" transform="rotate(102 46.0 13.8)"/><ellipse cx="76.3" cy="64.4" rx="4.0" ry="5.4" fill="#2a7a80" transform="rotate(10 76.3 64.4)"/><ellipse cx="55.2" cy="52.9" rx="1.9" ry="5.2" fill="#5aa8a0" transform="rotate(11 55.2 52.9)"/><ellipse cx="97.2" cy="57.0" rx="1.9" ry="5.0" fill="#4a9a9a" transform="rotate(18 97.2 57.0)"/><ellipse cx="65.4" cy="107.3" rx="4.0" ry="2.4" fill="#f2c0c8" transform="rotate(37 65.4 107.3)"/><ellipse cx="37.8" cy="38.4" rx="2.9" ry="3.8" fill="#d84050" transform="rotate(22 37.8 38.4)"/><ellipse cx="97.8" cy="59.5" rx="3.4" ry="2.4" fill="#e04a60" transform="rotate(18 97.8 59.5)"/><ellipse cx="79.9" cy="60.8" rx="4.3" ry="4.6" fill="#3a9090" transform="rotate(37 79.9 60.8)"/><ellipse cx="53.0" cy="81.7" rx="5.2" ry="5.8" fill="#5aa8a0" transform="rotate(54 53.0 81.7)"/><ellipse cx="76.7" cy="39.3" rx="3.0" ry="2.8" fill="#2a7a80" transform="rotate(139 76.7 39.3)"/><ellipse cx="65.8" cy="63.2" rx="4.0" ry="5.1" fill="#f09050" transform="rotate(142 65.8 63.2)"/><ellipse cx="84.5" cy="94.4" rx="4.5" ry="3.1" fill="#8ac8b8" transform="rotate(93 84.5 94.4)"/><ellipse cx="79.2" cy="111.4" rx="4.7" ry="4.4" fill="#8ac8b8" transform="rotate(35 79.2 111.4)"/><ellipse cx="59.1" cy="106.2" rx="5.5" ry="6.8" fill="#c8a0d0" transform="rotate(66 59.1 106.2)"/><ellipse cx="34.6" cy="59.9" rx="2.9" ry="4.4" fill="#e88aa8" transform="rotate(177 34.6 59.9)"/><ellipse cx="61.3" cy="78.0" rx="4.7" ry="2.4" fill="#f2c0c8" transform="rotate(119 61.3 78.0)"/><ellipse cx="82.8" cy="87.7" rx="3.4" ry="2.9" fill="#e04a60" transform="rotate(142 82.8 87.7)"/><ellipse cx="33.5" cy="107.1" rx="4.4" ry="4.3" fill="#5aa8a0" transform="rotate(134 33.5 107.1)"/><ellipse cx="78.8" cy="30.2" rx="2.0" ry="2.8" fill="#4a9a9a" transform="rotate(163 78.8 30.2)"/><ellipse cx="70.7" cy="72.4" rx="3.4" ry="6.7" fill="#2a7a80" transform="rotate(28 70.7 72.4)"/><ellipse cx="36.6" cy="14.8" rx="5.4" ry="5.2" fill="#4a9a9a" transform="rotate(95 36.6 14.8)"/><ellipse cx="58.1" cy="99.7" rx="4.8" ry="3.1" fill="#1e2a40" transform="rotate(45 58.1 99.7)"/><ellipse cx="62.9" cy="89.0" rx="2.8" ry="4.7" fill="#f4b0c4" transform="rotate(150 62.9 89.0)"/><ellipse cx="91.9" cy="48.4" rx="3.3" ry="4.9" fill="#6a5a9a" transform="rotate(163 91.9 48.4)"/><ellipse cx="86.0" cy="100.3" rx="2.0" ry="2.8" fill="#a8d0c0" transform="rotate(92 86.0 100.3)"/><ellipse cx="82.4" cy="73.6" rx="4.6" ry="2.7" fill="#3a8a8a" transform="rotate(25 82.4 73.6)"/><ellipse cx="66.8" cy="45.7" rx="3.6" ry="4.8" fill="#3a8a8a" transform="rotate(141 66.8 45.7)"/><ellipse cx="90.0" cy="19.0" rx="2.3" ry="2.2" fill="#a8d0c0" transform="rotate(18 90.0 19.0)"/><ellipse cx="67.2" cy="88.6" rx="5.1" ry="4.2" fill="#3a9090" transform="rotate(110 67.2 88.6)"/><ellipse cx="70.3" cy="33.1" rx="2.6" ry="4.5" fill="#3a9090" transform="rotate(145 70.3 33.1)"/><ellipse cx="94.1" cy="82.6" rx="5.0" ry="6.7" fill="#2a7a80" transform="rotate(47 94.1 82.6)"/><ellipse cx="90.7" cy="33.5" rx="3.3" ry="4.1" fill="#e04a60" transform="rotate(71 90.7 33.5)"/><ellipse cx="32.5" cy="37.2" rx="1.8" ry="5.3" fill="#4a9a9a" transform="rotate(141 32.5 37.2)"/><ellipse cx="94.0" cy="77.1" rx="3.0" ry="3.3" fill="#a8d0c0" transform="rotate(25 94.0 77.1)"/><ellipse cx="42.9" cy="107.7" rx="3.1" ry="4.4" fill="#c8a0d0" transform="rotate(178 42.9 107.7)"/><ellipse cx="38.8" cy="56.1" rx="3.6" ry="3.7" fill="#e04a60" transform="rotate(35 38.8 56.1)"/><ellipse cx="33.8" cy="49.6" rx="2.9" ry="4.3" fill="#f2c0c8" transform="rotate(127 33.8 49.6)"/><ellipse cx="50.8" cy="75.2" rx="3.5" ry="2.3" fill="#c8a0d0" transform="rotate(177 50.8 75.2)"/><ellipse cx="96.3" cy="23.8" rx="2.6" ry="2.2" fill="#2a3a5a" transform="rotate(140 96.3 23.8)"/><ellipse cx="81.0" cy="94.6" rx="4.9" ry="5.4" fill="#f2c0c8" transform="rotate(170 81.0 94.6)"/><ellipse cx="37.9" cy="104.4" rx="3.8" ry="5.5" fill="#f4b0c4" transform="rotate(16 37.9 104.4)"/><ellipse cx="84.1" cy="31.6" rx="5.1" ry="3.3" fill="#5aa8a0" transform="rotate(3 84.1 31.6)"/><ellipse cx="84.2" cy="21.7" rx="4.9" ry="2.3" fill="#a8d0c0" transform="rotate(155 84.2 21.7)"/><ellipse cx="28.1" cy="111.8" rx="3.2" ry="6.6" fill="#f4b0c4" transform="rotate(112 28.1 111.8)"/><ellipse cx="64.7" cy="37.0" rx="1.9" ry="2.8" fill="#f09050" transform="rotate(9 64.7 37.0)"/><ellipse cx="93.5" cy="75.6" rx="3.6" ry="3.0" fill="#e86a50" transform="rotate(80 93.5 75.6)"/><ellipse cx="46.5" cy="93.0" rx="5.5" ry="2.2" fill="#3a9090" transform="rotate(3 46.5 93.0)"/><ellipse cx="66.4" cy="32.2" rx="3.4" ry="6.7" fill="#6a5a9a" transform="rotate(19 66.4 32.2)"/><ellipse cx="73.9" cy="67.4" rx="5.1" ry="6.9" fill="#f09050" transform="rotate(55 73.9 67.4)"/><ellipse cx="97.1" cy="47.3" rx="4.8" ry="5.5" fill="#f2c0c8" transform="rotate(114 97.1 47.3)"/><ellipse cx="97.6" cy="110.6" rx="4.8" ry="2.1" fill="#2a3a5a" transform="rotate(113 97.6 110.6)"/><ellipse cx="57.9" cy="18.9" rx="4.2" ry="3.9" fill="#1e2a40" transform="rotate(91 57.9 18.9)"/><ellipse cx="69.8" cy="82.0" rx="1.7" ry="2.9" fill="#e88aa8" transform="rotate(48 69.8 82.0)"/><ellipse cx="46.0" cy="108.6" rx="5.4" ry="4.7" fill="#1e2a40" transform="rotate(44 46.0 108.6)"/><ellipse cx="42.8" cy="31.5" rx="2.8" ry="2.4" fill="#f09050" transform="rotate(50 42.8 31.5)"/><ellipse cx="44.9" cy="90.2" rx="1.9" ry="6.1" fill="#f4b0c4" transform="rotate(26 44.9 90.2)"/><ellipse cx="55.3" cy="43.1" rx="4.0" ry="2.4" fill="#4a9a9a" transform="rotate(172 55.3 43.1)"/><ellipse cx="74.0" cy="84.3" rx="5.0" ry="3.9" fill="#d84050" transform="rotate(59 74.0 84.3)"/><ellipse cx="37.9" cy="85.1" rx="4.1" ry="2.2" fill="#3a9090" transform="rotate(150 37.9 85.1)"/><ellipse cx="71.8" cy="86.1" rx="4.7" ry="2.7" fill="#3a9090" transform="rotate(94 71.8 86.1)"/><ellipse cx="67.7" cy="93.9" rx="1.6" ry="5.4" fill="#c8a0d0" transform="rotate(144 67.7 93.9)"/><ellipse cx="33.3" cy="17.5" rx="4.0" ry="6.8" fill="#a8d0c0" transform="rotate(68 33.3 17.5)"/><ellipse cx="67.0" cy="75.5" rx="4.0" ry="5.4" fill="#e88aa8" transform="rotate(88 67.0 75.5)"/><ellipse cx="59.7" cy="20.3" rx="5.2" ry="6.5" fill="#3a9090" transform="rotate(17 59.7 20.3)"/><ellipse cx="32.0" cy="86.3" rx="2.5" ry="2.4" fill="#f09050" transform="rotate(48 32.0 86.3)"/><ellipse cx="43.7" cy="77.7" rx="3.3" ry="6.2" fill="#1e2a40" transform="rotate(14 43.7 77.7)"/><ellipse cx="81.8" cy="74.5" rx="4.1" ry="2.4" fill="#2a3a5a" transform="rotate(27 81.8 74.5)"/><ellipse cx="73.6" cy="82.0" rx="4.0" ry="2.7" fill="#d84050" transform="rotate(87 73.6 82.0)"/><ellipse cx="46.4" cy="79.9" rx="4.3" ry="5.4" fill="#3a9090" transform="rotate(52 46.4 79.9)"/><ellipse cx="47.6" cy="59.5" rx="4.6" ry="7.0" fill="#1e2a40" transform="rotate(99 47.6 59.5)"/><ellipse cx="96.7" cy="106.1" rx="1.6" ry="4.3" fill="#a8d0c0" transform="rotate(148 96.7 106.1)"/><ellipse cx="97.9" cy="51.7" rx="5.2" ry="6.7" fill="#5aa8a0" transform="rotate(13 97.9 51.7)"/><ellipse cx="37.4" cy="65.3" rx="5.3" ry="2.7" fill="#3a9090" transform="rotate(148 37.4 65.3)"/><ellipse cx="47.1" cy="24.6" rx="3.0" ry="4.5" fill="#f2c0c8" transform="rotate(158 47.1 24.6)"/><ellipse cx="29.1" cy="13.8" rx="3.5" ry="4.3" fill="#4a9a9a" transform="rotate(54 29.1 13.8)"/><ellipse cx="56.8" cy="50.6" rx="2.0" ry="3.7" fill="#e04a60" transform="rotate(58 56.8 50.6)"/><ellipse cx="86.9" cy="25.3" rx="5.2" ry="5.6" fill="#1e2a40" transform="rotate(162 86.9 25.3)"/><ellipse cx="45.3" cy="19.8" rx="3.1" ry="6.3" fill="#6a5a9a" transform="rotate(14 45.3 19.8)"/><ellipse cx="81.0" cy="98.0" rx="2.6" ry="2.3" fill="#4a9a9a" transform="rotate(119 81.0 98.0)"/><ellipse cx="45.0" cy="39.7" rx="3.5" ry="2.9" fill="#6a5a9a" transform="rotate(67 45.0 39.7)"/><ellipse cx="90.1" cy="93.8" rx="4.0" ry="6.6" fill="#2a7a80" transform="rotate(169 90.1 93.8)"/><ellipse cx="41.7" cy="21.4" rx="5.2" ry="4.1" fill="#4a9a9a" transform="rotate(111 41.7 21.4)"/><ellipse cx="73.1" cy="41.7" rx="1.7" ry="6.6" fill="#d84050" transform="rotate(23 73.1 41.7)"/><ellipse cx="56.8" cy="41.3" rx="2.5" ry="5.7" fill="#f2c0c8" transform="rotate(118 56.8 41.3)"/><ellipse cx="73.9" cy="43.2" rx="3.7" ry="4.0" fill="#e86a50" transform="rotate(30 73.9 43.2)"/><ellipse cx="32.6" cy="63.0" rx="4.7" ry="4.8" fill="#e04a60" transform="rotate(82 32.6 63.0)"/><ellipse cx="98.0" cy="57.9" rx="2.1" ry="3.0" fill="#e04a60" transform="rotate(16 98.0 57.9)"/><ellipse cx="66.8" cy="45.0" rx="3.0" ry="6.0" fill="#e88aa8" transform="rotate(36 66.8 45.0)"/><ellipse cx="80.5" cy="54.3" rx="3.2" ry="4.6" fill="#e04a60" transform="rotate(68 80.5 54.3)"/><ellipse cx="80.7" cy="62.7" rx="3.8" ry="3.8" fill="#3a9090" transform="rotate(124 80.7 62.7)"/><ellipse cx="72.0" cy="98.8" rx="2.4" ry="3.4" fill="#f2c0c8" transform="rotate(45 72.0 98.8)"/><ellipse cx="73.2" cy="56.2" rx="2.7" ry="6.1" fill="#4a9a9a" transform="rotate(174 73.2 56.2)"/><ellipse cx="29.6" cy="83.6" rx="5.1" ry="4.4" fill="#e88aa8" transform="rotate(106 29.6 83.6)"/><ellipse cx="32.5" cy="105.5" rx="5.2" ry="4.6" fill="#a8d0c0" transform="rotate(84 32.5 105.5)"/><ellipse cx="44.9" cy="24.2" rx="2.1" ry="4.6" fill="#a8d0c0" transform="rotate(123 44.9 24.2)"/><ellipse cx="33.3" cy="90.3" rx="1.5" ry="2.6" fill="#f4b0c4" transform="rotate(102 33.3 90.3)"/><ellipse cx="73.1" cy="43.5" rx="2.0" ry="3.3" fill="#3a8a8a" transform="rotate(115 73.1 43.5)"/><ellipse cx="34.4" cy="43.1" rx="5.3" ry="3.0" fill="#e88aa8" transform="rotate(47 34.4 43.1)"/><ellipse cx="28.0" cy="43.3" rx="3.3" ry="6.8" fill="#c8a0d0" transform="rotate(116 28.0 43.3)"/><ellipse cx="61.0" cy="36.6" rx="2.5" ry="6.8" fill="#1e2a40" transform="rotate(127 61.0 36.6)"/><ellipse cx="31.2" cy="32.6" rx="5.0" ry="5.2" fill="#c8a0d0" transform="rotate(15 31.2 32.6)"/><ellipse cx="74.7" cy="105.0" rx="2.4" ry="2.2" fill="#6a5a9a" transform="rotate(61 74.7 105.0)"/><ellipse cx="53.0" cy="52.6" rx="1.5" ry="3.5" fill="#5aa8a0" transform="rotate(152 53.0 52.6)"/><ellipse cx="41.9" cy="109.4" rx="2.7" ry="6.1" fill="#c8a0d0" transform="rotate(42 41.9 109.4)"/><ellipse cx="46.1" cy="101.4" rx="1.9" ry="5.1" fill="#c8a0d0" transform="rotate(110 46.1 101.4)"/><ellipse cx="61.7" cy="103.5" rx="1.7" ry="5.0" fill="#f4b0c4" transform="rotate(166 61.7 103.5)"/><ellipse cx="42.4" cy="109.8" rx="2.1" ry="2.3" fill="#f2c0c8" transform="rotate(11 42.4 109.8)"/><ellipse cx="59.2" cy="83.9" rx="2.8" ry="2.6" fill="#e86a50" transform="rotate(14 59.2 83.9)"/><ellipse cx="50.7" cy="31.8" rx="5.2" ry="5.7" fill="#f2c0c8" transform="rotate(6 50.7 31.8)"/><ellipse cx="86.9" cy="110.9" rx="3.3" ry="2.5" fill="#5aa8a0" transform="rotate(14 86.9 110.9)"/><ellipse cx="52.3" cy="108.0" rx="2.0" ry="6.8" fill="#8ac8b8" transform="rotate(37 52.3 108.0)"/><ellipse cx="81.9" cy="44.0" rx="4.7" ry="2.4" fill="#f09050" transform="rotate(127 81.9 44.0)"/><ellipse cx="53.8" cy="104.4" rx="2.3" ry="3.8" fill="#e88aa8" transform="rotate(161 53.8 104.4)"/><ellipse cx="72.1" cy="38.0" rx="4.0" ry="4.0" fill="#a8d0c0" transform="rotate(68 72.1 38.0)"/><ellipse cx="31.7" cy="104.5" rx="2.5" ry="5.7" fill="#e04a60" transform="rotate(162 31.7 104.5)"/><ellipse cx="53.1" cy="46.6" rx="5.3" ry="2.2" fill="#e04a60" transform="rotate(134 53.1 46.6)"/><ellipse cx="92.9" cy="42.8" rx="4.4" ry="5.0" fill="#5aa8a0" transform="rotate(145 92.9 42.8)"/><ellipse cx="29.0" cy="36.6" rx="3.4" ry="6.8" fill="#f2c0c8" transform="rotate(172 29.0 36.6)"/><ellipse cx="83.4" cy="103.8" rx="4.8" ry="2.7" fill="#e88aa8" transform="rotate(89 83.4 103.8)"/><ellipse cx="84.3" cy="86.5" rx="4.8" ry="5.9" fill="#e04a60" transform="rotate(109 84.3 86.5)"/><ellipse cx="88.4" cy="59.0" rx="4.6" ry="5.0" fill="#f2c0c8" transform="rotate(92 88.4 59.0)"/><ellipse cx="80.8" cy="37.9" rx="1.8" ry="2.2" fill="#e04a60" transform="rotate(99 80.8 37.9)"/><ellipse cx="38.7" cy="55.6" rx="1.9" ry="2.4" fill="#f09050" transform="rotate(112 38.7 55.6)"/><ellipse cx="34.1" cy="62.7" rx="4.3" ry="4.2" fill="#6a5a9a" transform="rotate(42 34.1 62.7)"/><ellipse cx="60.0" cy="101.6" rx="2.4" ry="4.7" fill="#3a8a8a" transform="rotate(139 60.0 101.6)"/><ellipse cx="82.7" cy="42.5" rx="2.6" ry="3.3" fill="#2a3a5a" transform="rotate(46 82.7 42.5)"/><ellipse cx="41.4" cy="37.9" rx="2.5" ry="2.8" fill="#f09050" transform="rotate(159 41.4 37.9)"/><ellipse cx="50.5" cy="52.6" rx="5.5" ry="4.5" fill="#3a8a8a" transform="rotate(42 50.5 52.6)"/><ellipse cx="73.7" cy="111.5" rx="1.9" ry="4.4" fill="#a8d0c0" transform="rotate(147 73.7 111.5)"/><ellipse cx="92.2" cy="17.4" rx="2.7" ry="2.6" fill="#f09050" transform="rotate(34 92.2 17.4)"/><ellipse cx="93.3" cy="50.3" rx="5.0" ry="4.2" fill="#e88aa8" transform="rotate(47 93.3 50.3)"/><ellipse cx="34.8" cy="72.4" rx="4.0" ry="3.1" fill="#4a9a9a" transform="rotate(66 34.8 72.4)"/><ellipse cx="30.4" cy="112.4" rx="1.7" ry="5.7" fill="#e88aa8" transform="rotate(165 30.4 112.4)"/><ellipse cx="85.4" cy="53.9" rx="3.0" ry="5.1" fill="#f4b0c4" transform="rotate(14 85.4 53.9)"/><ellipse cx="83.8" cy="67.7" rx="1.8" ry="2.5" fill="#2a7a80" transform="rotate(71 83.8 67.7)"/><ellipse cx="38.3" cy="66.3" rx="4.1" ry="4.0" fill="#1e2a40" transform="rotate(49 38.3 66.3)"/><ellipse cx="74.7" cy="54.8" rx="1.7" ry="5.7" fill="#6a5a9a" transform="rotate(159 74.7 54.8)"/><ellipse cx="56.9" cy="99.0" rx="5.5" ry="3.8" fill="#f2c0c8" transform="rotate(35 56.9 99.0)"/><ellipse cx="41.8" cy="14.0" rx="5.1" ry="4.1" fill="#f2c0c8" transform="rotate(148 41.8 14.0)"/><ellipse cx="68.3" cy="49.5" rx="4.6" ry="2.6" fill="#4a9a9a" transform="rotate(9 68.3 49.5)"/><ellipse cx="72.8" cy="103.5" rx="1.9" ry="5.1" fill="#3a9090" transform="rotate(67 72.8 103.5)"/><ellipse cx="39.5" cy="47.8" rx="2.1" ry="2.9" fill="#f2c0c8" transform="rotate(12 39.5 47.8)"/><ellipse cx="62.1" cy="93.1" rx="5.4" ry="3.0" fill="#f4b0c4" transform="rotate(23 62.1 93.1)"/><ellipse cx="96.6" cy="61.2" rx="1.7" ry="6.6" fill="#e86a50" transform="rotate(70 96.6 61.2)"/><ellipse cx="72.8" cy="98.2" rx="4.0" ry="5.1" fill="#d84050" transform="rotate(35 72.8 98.2)"/><ellipse cx="40.3" cy="35.0" rx="3.1" ry="4.6" fill="#3a8a8a" transform="rotate(69 40.3 35.0)"/><ellipse cx="37.9" cy="109.5" rx="4.8" ry="3.0" fill="#f4b0c4" transform="rotate(159 37.9 109.5)"/><ellipse cx="74.7" cy="45.5" rx="3.1" ry="4.3" fill="#1e2a40" transform="rotate(153 74.7 45.5)"/><ellipse cx="73.4" cy="43.9" rx="2.5" ry="3.9" fill="#3a9090" transform="rotate(66 73.4 43.9)"/><ellipse cx="58.4" cy="15.7" rx="4.0" ry="4.4" fill="#a8d0c0" transform="rotate(42 58.4 15.7)"/><ellipse cx="86.7" cy="93.6" rx="3.1" ry="2.3" fill="#8ac8b8" transform="rotate(65 86.7 93.6)"/><ellipse cx="33.8" cy="57.2" rx="3.5" ry="2.2" fill="#5aa8a0" transform="rotate(115 33.8 57.2)"/><ellipse cx="92.8" cy="44.5" rx="4.4" ry="2.4" fill="#f2c0c8" transform="rotate(135 92.8 44.5)"/><ellipse cx="73.6" cy="91.0" rx="1.6" ry="2.3" fill="#3a8a8a" transform="rotate(111 73.6 91.0)"/><ellipse cx="41.1" cy="110.6" rx="3.5" ry="6.8" fill="#e86a50" transform="rotate(165 41.1 110.6)"/><ellipse cx="76.0" cy="84.8" rx="2.4" ry="6.2" fill="#2a3a5a" transform="rotate(110 76.0 84.8)"/><ellipse cx="38.6" cy="102.2" rx="2.6" ry="6.1" fill="#3a9090" transform="rotate(26 38.6 102.2)"/><ellipse cx="95.8" cy="60.9" rx="3.9" ry="5.1" fill="#8ac8b8" transform="rotate(43 95.8 60.9)"/><ellipse cx="29.9" cy="31.4" rx="2.1" ry="6.7" fill="#f2c0c8" transform="rotate(122 29.9 31.4)"/><ellipse cx="39.3" cy="91.1" rx="2.0" ry="4.7" fill="#8ac8b8" transform="rotate(115 39.3 91.1)"/><ellipse cx="95.9" cy="58.3" rx="3.6" ry="5.4" fill="#2a3a5a" transform="rotate(161 95.9 58.3)"/><ellipse cx="97.8" cy="75.7" rx="3.1" ry="6.0" fill="#8ac8b8" transform="rotate(48 97.8 75.7)"/><ellipse cx="68.3" cy="49.1" rx="4.6" ry="4.2" fill="#f4b0c4" transform="rotate(32 68.3 49.1)"/><ellipse cx="48.3" cy="64.5" rx="2.7" ry="6.8" fill="#e04a60" transform="rotate(157 48.3 64.5)"/><ellipse cx="79.3" cy="87.4" rx="2.4" ry="3.5" fill="#6a5a9a" transform="rotate(113 79.3 87.4)"/><ellipse cx="63.7" cy="102.1" rx="2.0" ry="3.1" fill="#e88aa8" transform="rotate(118 63.7 102.1)"/><ellipse cx="31.2" cy="69.5" rx="2.7" ry="4.6" fill="#6a5a9a" transform="rotate(96 31.2 69.5)"/><ellipse cx="68.7" cy="71.7" rx="2.3" ry="5.1" fill="#4a9a9a" transform="rotate(85 68.7 71.7)"/><ellipse cx="28.3" cy="92.7" rx="4.3" ry="4.3" fill="#4a9a9a" transform="rotate(11 28.3 92.7)"/><ellipse cx="89.2" cy="90.8" rx="3.1" ry="3.3" fill="#2a7a80" transform="rotate(2 89.2 90.8)"/><ellipse cx="90.7" cy="72.3" rx="3.8" ry="5.0" fill="#d84050" transform="rotate(93 90.7 72.3)"/><ellipse cx="44.9" cy="102.8" rx="1.7" ry="4.7" fill="#c8a0d0" transform="rotate(73 44.9 102.8)"/><ellipse cx="38.6" cy="103.7" rx="1.9" ry="5.1" fill="#f09050" transform="rotate(118 38.6 103.7)"/><ellipse cx="37.4" cy="33.2" rx="3.9" ry="4.5" fill="#e86a50" transform="rotate(115 37.4 33.2)"/><ellipse cx="63.4" cy="19.7" rx="4.0" ry="7.0" fill="#d84050" transform="rotate(130 63.4 19.7)"/><ellipse cx="78.1" cy="14.0" rx="4.9" ry="5.7" fill="#a8d0c0" transform="rotate(84 78.1 14.0)"/><ellipse cx="39.8" cy="112.1" rx="2.5" ry="5.2" fill="#2a3a5a" transform="rotate(22 39.8 112.1)"/><ellipse cx="77.8" cy="39.7" rx="3.7" ry="4.2" fill="#3a9090" transform="rotate(142 77.8 39.7)"/><ellipse cx="96.3" cy="42.7" rx="5.2" ry="6.5" fill="#3a9090" transform="rotate(15 96.3 42.7)"/><ellipse cx="28.4" cy="39.2" rx="2.4" ry="5.7" fill="#e04a60" transform="rotate(170 28.4 39.2)"/><ellipse cx="40.9" cy="51.9" rx="3.9" ry="3.9" fill="#2a7a80" transform="rotate(153 40.9 51.9)"/><ellipse cx="60.6" cy="96.5" rx="4.3" ry="6.3" fill="#c8a0d0" transform="rotate(79 60.6 96.5)"/><ellipse cx="67.8" cy="43.9" rx="2.3" ry="5.1" fill="#e86a50" transform="rotate(14 67.8 43.9)"/><ellipse cx="37.6" cy="16.1" rx="1.9" ry="6.6" fill="#4a9a9a" transform="rotate(62 37.6 16.1)"/><ellipse cx="77.1" cy="16.5" rx="2.1" ry="5.2" fill="#5aa8a0" transform="rotate(8 77.1 16.5)"/><ellipse cx="79.6" cy="19.9" rx="3.9" ry="3.8" fill="#2a7a80" transform="rotate(147 79.6 19.9)"/><ellipse cx="90.6" cy="19.9" rx="5.0" ry="6.6" fill="#3a8a8a" transform="rotate(170 90.6 19.9)"/><ellipse cx="44.8" cy="33.5" rx="1.6" ry="6.7" fill="#5aa8a0" transform="rotate(164 44.8 33.5)"/><ellipse cx="85.9" cy="75.9" rx="2.6" ry="2.5" fill="#f09050" transform="rotate(18 85.9 75.9)"/><ellipse cx="48.2" cy="46.7" rx="2.5" ry="3.8" fill="#f4b0c4" transform="rotate(167 48.2 46.7)"/><ellipse cx="78.1" cy="49.8" rx="2.8" ry="6.8" fill="#1e2a40" transform="rotate(91 78.1 49.8)"/><ellipse cx="71.2" cy="16.5" rx="3.2" ry="4.2" fill="#8ac8b8" transform="rotate(139 71.2 16.5)"/><ellipse cx="60.6" cy="18.2" rx="3.8" ry="5.6" fill="#1e2a40" transform="rotate(149 60.6 18.2)"/><ellipse cx="39.4" cy="13.5" rx="2.3" ry="5.8" fill="#e88aa8" transform="rotate(176 39.4 13.5)"/><ellipse cx="52.0" cy="22.9" rx="4.3" ry="6.1" fill="#8ac8b8" transform="rotate(174 52.0 22.9)"/><ellipse cx="95.3" cy="64.4" rx="3.8" ry="2.8" fill="#c8a0d0" transform="rotate(147 95.3 64.4)"/><ellipse cx="62.7" cy="24.3" rx="4.0" ry="2.4" fill="#2a7a80" transform="rotate(142 62.7 24.3)"/><ellipse cx="83.2" cy="75.6" rx="2.9" ry="4.0" fill="#5aa8a0" transform="rotate(71 83.2 75.6)"/><ellipse cx="57.3" cy="77.3" rx="3.0" ry="3.5" fill="#2a7a80" transform="rotate(77 57.3 77.3)"/><ellipse cx="62.9" cy="51.0" rx="5.0" ry="3.2" fill="#2a7a80" transform="rotate(83 62.9 51.0)"/><ellipse cx="69.5" cy="81.6" rx="3.9" ry="2.2" fill="#3a9090" transform="rotate(105 69.5 81.6)"/><ellipse cx="38.3" cy="96.9" rx="4.1" ry="5.7" fill="#a8d0c0" transform="rotate(31 38.3 96.9)"/><ellipse cx="76.2" cy="38.9" rx="2.4" ry="3.7" fill="#c8a0d0" transform="rotate(116 76.2 38.9)"/><ellipse cx="63.3" cy="39.9" rx="4.5" ry="6.1" fill="#4a9a9a" transform="rotate(111 63.3 39.9)"/><ellipse cx="96.5" cy="85.0" rx="3.9" ry="3.7" fill="#f09050" transform="rotate(43 96.5 85.0)"/><ellipse cx="45.7" cy="107.9" rx="5.5" ry="2.8" fill="#f09050" transform="rotate(118 45.7 107.9)"/><ellipse cx="54.6" cy="110.8" rx="4.7" ry="5.7" fill="#f09050" transform="rotate(78 54.6 110.8)"/><ellipse cx="35.1" cy="103.6" rx="2.6" ry="6.4" fill="#e88aa8" transform="rotate(84 35.1 103.6)"/><ellipse cx="55.6" cy="91.7" rx="4.3" ry="4.5" fill="#a8d0c0" transform="rotate(114 55.6 91.7)"/><ellipse cx="28.9" cy="38.9" rx="4.5" ry="2.0" fill="#6a5a9a" transform="rotate(44 28.9 38.9)"/><ellipse cx="77.1" cy="71.6" rx="4.1" ry="6.2" fill="#c8a0d0" transform="rotate(120 77.1 71.6)"/><ellipse cx="75.6" cy="76.9" rx="3.3" ry="3.6" fill="#3a8a8a" transform="rotate(113 75.6 76.9)"/></g>
</svg></div></div>
<div class="ct" style="left:1439.00px;top:646px">1.psd</div>
<div class="cs" style="left:1439.00px;top:662px">1 month ago</div>
<div class="card" style="left:499.00px;top:716px"><div class="img" style="left:6px;top:6px;width:126px;height:126px"><svg width="126" height="126" viewBox="0 0 126 126" style="display:block" >
<defs><linearGradient id="cvbg" x1="0" y1="0" x2="1" y2="1"><stop offset="0" stop-color="#eeeeee"/><stop offset="1" stop-color="#dedede"/></linearGradient>
<filter id="cvb" x="-10%" y="-10%" width="120%" height="120%"><feGaussianBlur stdDeviation="0.5"/></filter></defs>
<rect width="126" height="126" fill="url(#cvbg)"/>
<g filter="url(#cvb)">
<rect x="9.5" y="9" width="51" height="63" fill="#c8c8c8" opacity="0.6"/>
<rect x="8.5" y="8" width="50.8" height="63" fill="#f8f8f8"/><rect x="10.4" y="9.8" width="47.6" height="59.2" fill="#1f3128"/>
<rect x="67.6" y="9" width="51" height="63" fill="#c8c8c8" opacity="0.6"/>
<rect x="66.6" y="8" width="50.8" height="63" fill="#f8f8f8"/><rect x="68.5" y="9.8" width="47.2" height="59.2" fill="#1f3128"/>
<g stroke="#7a9a50" stroke-width="0.9" fill="none"><path d="M19 69 C18 50 18 30 20 21 C22 17 26 19 28 26"/><path d="M29 69 V50"/><path d="M34 69 C36 60 40 55 46 58"/><path d="M92 69 V47"/></g>
<g fill="#ec9048"><circle cx="41.3" cy="22.3" r="10"/><circle cx="30.5" cy="42" r="9.5"/></g>
<circle cx="44" cy="38.5" r="4.5" fill="#c85a4a"/>
<g fill="#d8b020"><circle cx="41.3" cy="22.3" r="2.2"/><circle cx="30.5" cy="42" r="2.2"/></g>
<circle cx="92" cy="30.8" r="17" fill="#f08c40"/><circle cx="92" cy="30.8" r="4" fill="#d8a828"/>
<rect x="38.3" y="59.7" width="51.3" height="63.1" fill="#c8c8c8" opacity="0.6"/>
<rect x="37.3" y="58.7" width="51.3" height="63.1" fill="#f8f8f8"/><rect x="39.2" y="60.5" width="47.6" height="59.4" fill="#1c2622"/>
<g><circle cx="56" cy="72" r="5" fill="#e8b080"/><circle cx="66" cy="70" r="5" fill="#f0c090"/><circle cx="53" cy="80" r="5" fill="#f0b8a0"/><circle cx="64" cy="80" r="6" fill="#e07878"/><circle cx="74" cy="76" r="5" fill="#d84050"/><circle cx="62" cy="89" r="6" fill="#c82838"/><circle cx="72" cy="86" r="5" fill="#d83848"/><circle cx="51" cy="90" r="3.5" fill="#f0c8b8"/><circle cx="78" cy="90" r="3" fill="#e8a090"/><circle cx="55" cy="99" r="3" fill="#e8c8c0"/></g>
<rect x="60" y="94" width="10" height="17" rx="2" fill="#8ab070"/>
<g><ellipse cx="48" cy="110" rx="6" ry="4" fill="#c83a30"/><ellipse cx="58" cy="112" rx="5" ry="3" fill="#d85040"/><ellipse cx="78" cy="110" rx="6" ry="4" fill="#d04848"/><ellipse cx="84" cy="114" rx="3" ry="3" fill="#e87070"/><ellipse cx="66" cy="116" rx="8" ry="2.5" fill="#5a3020"/></g>
</g>
</svg></div></div>
<div class="ct" style="left:499.00px;top:871px">Canvas-White-3Frames.psd</div>
<div class="cs" style="left:499.00px;top:887px">1 month ago</div>
<div class="card" style="left:655.67px;top:716px"><div class="img" style="left:6px;top:46px;width:126px;height:45.5px"><svg width="126" height="45.5" viewBox="0 0 126 45.5" style="display:block" >
<rect width="126" height="45.5" fill="#ffffff"/>
<rect x="10" y="0.8" width="41.5" height="44" fill="#e8c57e"/>
<rect x="73" y="0.8" width="41.5" height="44" fill="#e8c57e"/>
<path d="M0 22.5 H126 M63 0 V45.5" stroke="#eeeeee" stroke-width="0.6"/>
</svg></div></div>
<div class="ct" style="left:655.67px;top:871px">PZ 10oz template.png</div>
<div class="cs" style="left:655.67px;top:887px">1 month ago</div>
<div class="card" style="left:812.33px;top:716px"><div class="img" style="left:6px;top:46px;width:126px;height:46px"><svg width="126" height="46" viewBox="0 0 126 46" style="display:block" >
<defs><filter id="c2b" x="-10%" y="-10%" width="120%" height="120%"><feGaussianBlur stdDeviation="0.6"/></filter></defs>
<rect width="126" height="46" fill="#ffffff"/>
<g filter="url(#c2b)">
<rect x="10.2" y="1" width="40.8" height="33" fill="#b8c8a0"/>
<rect x="40" y="1" width="11" height="33" fill="#8aa870"/><rect x="10.2" y="1" width="8" height="20" fill="#90ac78"/>
<ellipse cx="31" cy="11" rx="12" ry="9" fill="#b4aca4"/>
<ellipse cx="31" cy="18" rx="7.5" ry="9" fill="#d4a48c"/>
<path d="M10.2 34 L10.2 29 C16 26 22 26 26 28 L36 28 C40 26 46 26 51 29 L51 34 Z" fill="#d6d6dc"/>
<rect x="26" y="27" width="10" height="7" fill="#e4d0cc"/>
</g>
<text x="29.5" y="39.8" font-family="Liberation Serif" font-style="italic" font-weight="bold" font-size="4.6" fill="#1a1a1a" text-anchor="middle" textLength="23" lengthAdjust="spacingAndGlyphs">Sarah Baker</text>
<text x="30" y="45" font-family="Liberation Serif" font-style="italic" font-weight="bold" font-size="4.2" fill="#1a1a1a" text-anchor="middle" textLength="18" lengthAdjust="spacingAndGlyphs">1955 - 2025</text>
<g font-family="Liberation Serif" font-style="italic" font-weight="bold" fill="#1a1a1a" font-size="8" text-anchor="middle">
<text x="93" y="11" textLength="31" lengthAdjust="spacingAndGlyphs">Always on</text>
<text x="93" y="19" textLength="25" lengthAdjust="spacingAndGlyphs">my mind</text>
<text x="93" y="27" textLength="25" lengthAdjust="spacingAndGlyphs">forever in</text>
<text x="93" y="35" textLength="25" lengthAdjust="spacingAndGlyphs">my heart</text>
</g>
<path d="M93.3 42.5 L90.8 40 C89.8 39 90.5 37.6 91.7 37.6 C92.5 37.6 93 38.2 93.3 38.7 C93.6 38.2 94.1 37.6 94.9 37.6 C96.1 37.6 96.8 39 95.8 40 Z" fill="#8a1a3a"/>
</svg></div></div>
<div class="ct" style="left:812.33px;top:871px">candle in my mind 2.png</div>
<div class="cs" style="left:812.33px;top:887px">1 month ago</div>
<div class="card" style="left:969.00px;top:716px"><div class="img" style="left:6px;top:19.5px;width:126px;height:99.5px"><svg width="126" height="99.5" viewBox="0 0 126 99.5" style="display:block" >
<defs><filter id="cdba" x="-10%" y="-10%" width="120%" height="120%"><feGaussianBlur stdDeviation="0.6"/></filter>
<radialGradient id="fla" cx="0.5" cy="0.6" r="0.5"><stop offset="0" stop-color="#fffef0"/><stop offset="1" stop-color="#fff0c0" stop-opacity="0"/></radialGradient></defs>
<rect width="126" height="99.5" fill="#d8d4d8"/>
<g filter="url(#cdba)">
<rect x="0" y="12.5" width="126" height="40" fill="#dcd8dc"/>
<g fill="#3a5a30"><ellipse cx="5" cy="18" rx="6" ry="4"/><ellipse cx="10" cy="24" rx="5" ry="3"/><ellipse cx="3" cy="26" rx="3" ry="3"/></g>
<rect x="111.5" y="33.5" width="14" height="28" fill="#e2d4b8"/>
<rect x="111.5" y="40" width="14" height="1" fill="#b8a888"/><rect x="111.5" y="50" width="14" height="1" fill="#b8a888"/>
<rect x="111.5" y="61.5" width="14" height="24" fill="#9c4a3c"/>
<rect x="60" y="40" width="8" height="14.5" fill="#e0d2b4"/>
<rect x="57.5" y="54.5" width="10" height="25" fill="#96483a"/>
<path d="M0 50.5 C8 50 14 58 13.5 70 C13 80 8 88 0 88.5 Z" fill="#e6a240"/>
<rect x="0" y="86" width="126" height="13.5" fill="#e8e2de"/>
<ellipse cx="36" cy="90" rx="25.5" ry="6.5" fill="#b87a4c"/><ellipse cx="90" cy="90" rx="25.5" ry="6.5" fill="#b87a4c"/>
<ellipse cx="36" cy="88" rx="23" ry="4" fill="#d09464"/><ellipse cx="90" cy="88" rx="23" ry="4" fill="#d09464"/>

<rect x="14.5" y="30.5" width="43" height="58" rx="3" fill="#f6f2ea"/>
<rect x="67.5" y="31.5" width="44" height="57" rx="3" fill="#f8f4ee"/>
<rect x="19" y="36.5" width="38.5" height="36" fill="#a8b488"/>
<rect x="19" y="36.5" width="10" height="20" fill="#c8d0a8"/><rect x="48" y="38" width="9.5" height="22" fill="#8a9a60"/>
<ellipse cx="39" cy="46" rx="9" ry="7" fill="#e4d4b0"/>
<ellipse cx="40" cy="54" rx="6.5" ry="8" fill="#dcae94"/>
<path d="M19 72.5 L19 66 C24 62 30 62 34 64 L46 64 C50 62 54 63 57.5 66 L57.5 72.5 Z" fill="#ccccd0"/>

<ellipse cx="36.5" cy="26" rx="2.5" ry="5.5" fill="url(#fla)"/><ellipse cx="90.5" cy="26" rx="2.5" ry="5.5" fill="url(#fla)"/>
<ellipse cx="36.5" cy="27" rx="1.2" ry="3.5" fill="#fffcee"/><ellipse cx="90.5" cy="27" rx="1.2" ry="3.5" fill="#fffcee"/>
</g>
<rect x="0" y="0" width="126" height="12.5" fill="#f2f0ee"/>
<text x="5.5" y="9.2" font-family="Liberation Sans" font-weight="bold" font-size="7.3" fill="#1e1e1e" textLength="115" lengthAdjust="spacing">PRINTED ON BOTH SIDES</text>

<text x="39" y="80" font-family="Liberation Serif" font-style="italic" font-weight="bold" font-size="5.4" fill="#1a1a1a" text-anchor="middle" textLength="25" lengthAdjust="spacingAndGlyphs">Sarah Baker</text>
<text x="40" y="86" font-family="Liberation Serif" font-style="italic" font-weight="bold" font-size="4.8" fill="#1a1a1a" text-anchor="middle" textLength="19" lengthAdjust="spacingAndGlyphs">1955 - 2025</text>
<g font-family="Liberation Serif" font-style="italic" fill="#2a2a2a" font-size="9" text-anchor="middle">
<text x="92" y="51" textLength="29" lengthAdjust="spacingAndGlyphs">Always on</text>
<text x="92" y="60" textLength="25" lengthAdjust="spacingAndGlyphs">my mind</text>
<text x="92" y="69" textLength="27" lengthAdjust="spacingAndGlyphs">forever in</text>
<text x="92" y="78" textLength="25" lengthAdjust="spacingAndGlyphs">my heart</text>
</g>
<path d="M94 85 L91.6 82.6 C90.6 81.6 91.3 80.2 92.5 80.2 C93.3 80.2 93.8 80.8 94 81.2 C94.3 80.8 94.8 80.2 95.6 80.2 C96.8 80.2 97.5 81.6 96.5 82.6 Z" fill="#c8305a"/>
</svg></div></div>
<div class="ct" style="left:969.00px;top:871px">candle in my mind 2Suffix4</div>
<div class="ct" style="left:969.00px;top:887px">(1).psd</div>
<div class="cs" style="left:969.00px;top:903px">1 month ago</div>
<div class="card" style="left:1125.67px;top:716px"><div class="img" style="left:6px;top:19.5px;width:126px;height:99.5px"><svg width="126" height="99.5" viewBox="0 0 126 99.5" style="display:block" >
<defs><filter id="cdbb" x="-10%" y="-10%" width="120%" height="120%"><feGaussianBlur stdDeviation="0.6"/></filter>
<radialGradient id="flb" cx="0.5" cy="0.6" r="0.5"><stop offset="0" stop-color="#fffef0"/><stop offset="1" stop-color="#fff0c0" stop-opacity="0"/></radialGradient></defs>
<rect width="126" height="99.5" fill="#d8d4d8"/>
<g filter="url(#cdbb)">
<rect x="0" y="12.5" width="126" height="40" fill="#dcd8dc"/>
<g fill="#3a5a30"><ellipse cx="5" cy="18" rx="6" ry="4"/><ellipse cx="10" cy="24" rx="5" ry="3"/><ellipse cx="3" cy="26" rx="3" ry="3"/></g>
<rect x="111.5" y="33.5" width="14" height="28" fill="#e2d4b8"/>
<rect x="111.5" y="40" width="14" height="1" fill="#b8a888"/><rect x="111.5" y="50" width="14" height="1" fill="#b8a888"/>
<rect x="111.5" y="61.5" width="14" height="24" fill="#9c4a3c"/>
<rect x="60" y="40" width="8" height="14.5" fill="#e0d2b4"/>
<rect x="57.5" y="54.5" width="10" height="25" fill="#96483a"/>
<path d="M0 50.5 C8 50 14 58 13.5 70 C13 80 8 88 0 88.5 Z" fill="#e6a240"/>
<rect x="0" y="86" width="126" height="13.5" fill="#e8e2de"/>
<ellipse cx="36" cy="90" rx="25.5" ry="6.5" fill="#b87a4c"/><ellipse cx="90" cy="90" rx="25.5" ry="6.5" fill="#b87a4c"/>
<ellipse cx="36" cy="88" rx="23" ry="4" fill="#d09464"/><ellipse cx="90" cy="88" rx="23" ry="4" fill="#d09464"/>

<rect x="14.5" y="30.5" width="43" height="58" rx="3" fill="#f2ead4"/>
<rect x="67.5" y="31.5" width="44" height="57" rx="3" fill="#f2ead4"/>
<rect x="17.5" y="33.5" width="37" height="52" rx="2" fill="#e8d498"/>
<rect x="70.5" y="34.5" width="38" height="51" rx="2" fill="#e8d498"/>

<ellipse cx="36.5" cy="26" rx="2.5" ry="5.5" fill="url(#flb)"/><ellipse cx="90.5" cy="26" rx="2.5" ry="5.5" fill="url(#flb)"/>
<ellipse cx="36.5" cy="27" rx="1.2" ry="3.5" fill="#fffcee"/><ellipse cx="90.5" cy="27" rx="1.2" ry="3.5" fill="#fffcee"/>
</g>
<rect x="0" y="0" width="126" height="12.5" fill="#f2f0ee"/>
<text x="5.5" y="9.2" font-family="Liberation Sans" font-weight="bold" font-size="7.3" fill="#1e1e1e" textLength="115" lengthAdjust="spacing">PRINTED ON BOTH SIDES</text>
</svg></div></div>
<div class="ct" style="left:1125.67px;top:871px">4 (1).psd</div>
<div class="cs" style="left:1125.67px;top:887px">1 month ago</div>
<div class="card" style="left:1282.33px;top:716px"><div class="img" style="left:6px;top:6px;width:126px;height:126px"><svg width="126" height="126" viewBox="0 0 126 126" style="display:block" ><rect width="126" height="126" fill="#000000"/></svg></div></div>
<div class="ct" style="left:1282.33px;top:871px">B40.psd</div>
<div class="cs" style="left:1282.33px;top:887px">1 month ago</div>
<svg class="a" style="left:1720px;top:698px" width="198" height="198" viewBox="0 0 198 198">
<defs><clipPath id="wc"><circle cx="99" cy="99" r="97.2"/></clipPath>
<linearGradient id="wall" x1="0" y1="0" x2="1" y2="0"><stop offset="0" stop-color="#7a7448"/><stop offset="1" stop-color="#9a945c"/></linearGradient>
<filter id="wcb" x="-10%" y="-10%" width="120%" height="120%"><feGaussianBlur stdDeviation="1.6"/></filter>
<filter id="wcb2" x="-20%" y="-20%" width="140%" height="140%"><feGaussianBlur stdDeviation="2.5"/></filter></defs>
<g clip-path="url(#wc)">
<rect width="198" height="198" fill="url(#wall)"/>
<g filter="url(#wcb)">
<rect x="117" y="0" width="81" height="198" fill="url(#wall)"/>
<rect x="150" y="10" width="48" height="188" fill="#9e9860"/>
<rect x="53" y="0" width="42" height="38" fill="#b8d0c4"/>
<rect x="93" y="0" width="25" height="90" fill="#6c6a5a"/>
<rect x="0" y="12" width="55" height="82" fill="#3a70c0"/>
<g fill="#a8d0f0" opacity="0.85"><ellipse cx="20" cy="30" rx="5" ry="7"/><ellipse cx="36" cy="50" rx="6" ry="5"/><ellipse cx="16" cy="64" rx="5" ry="6"/><ellipse cx="30" cy="80" rx="5" ry="6"/><ellipse cx="44" cy="26" rx="4" ry="6"/><ellipse cx="8" cy="44" rx="4" ry="5"/><ellipse cx="26" cy="46" rx="3" ry="4"/><ellipse cx="44" cy="70" rx="3" ry="5"/><ellipse cx="6" cy="80" rx="3" ry="4"/></g>
<rect x="0" y="94" width="30" height="18" fill="#9aa49a"/>
<rect x="0" y="104" width="30" height="30" fill="#262626"/>
<path d="M26 60 C30 50 50 46 60 48 L64 120 L30 125 Z" fill="#4a4a50"/>
<path d="M0 125 L40 118 L60 198 L0 198 Z" fill="#222224"/>
</g>
<g filter="url(#wcb2)">
<path d="M54 62 C50 40 70 24 94 24 C116 24 130 40 127 64 C125 72 120 78 116 82 L112 60 C100 54 80 54 62 70 Z" fill="#1a1616"/>
<ellipse cx="86" cy="96" rx="27" ry="35" fill="#b08478"/>
<path d="M66 50 C76 42 100 40 112 56 L114 70 C100 60 78 60 64 68 Z" fill="#1e1818"/>
<path d="M58 100 C60 122 72 134 84 134 C98 134 108 122 110 102 C104 112 96 114 86 112 C74 114 64 110 58 100 Z" fill="#2a1e1a"/>
<path d="M70 104 C78 100 90 100 96 104 L94 110 C86 108 78 108 72 110 Z" fill="#2a1a16"/>
<ellipse cx="72" cy="83" rx="12" ry="8" fill="#c8a8a0" opacity="0.7"/><ellipse cx="100" cy="85" rx="12" ry="8" fill="#c8a8a0" opacity="0.7"/>
<path d="M8 140 C24 118 50 110 64 116 L80 136 L110 120 C130 118 150 140 162 198 L0 198 Z" fill="#e8e8ee"/>
<path d="M64 118 L78 140 L96 134 L104 118 C96 126 80 128 64 118 Z" fill="#b08070"/>
<rect x="81" y="121" width="31" height="77" rx="14" fill="#2a2636"/>
<path d="M50 158 C60 150 74 150 84 158" stroke="#101010" stroke-width="6" fill="none"/>
<rect x="86" y="162" width="24" height="36" fill="#141414"/>
</g>
</g>
</svg>
<svg class="a" style="left:567px;top:60px" width="12" height="16" viewBox="0 0 12 16"><path d="M1 1 L1 12.5 L3.8 10 L6 14.8 L7.8 14 L5.7 9.3 L9.5 9.3 Z" fill="#111" stroke="#eee" stroke-width="1"/></svg>

</body></html>
